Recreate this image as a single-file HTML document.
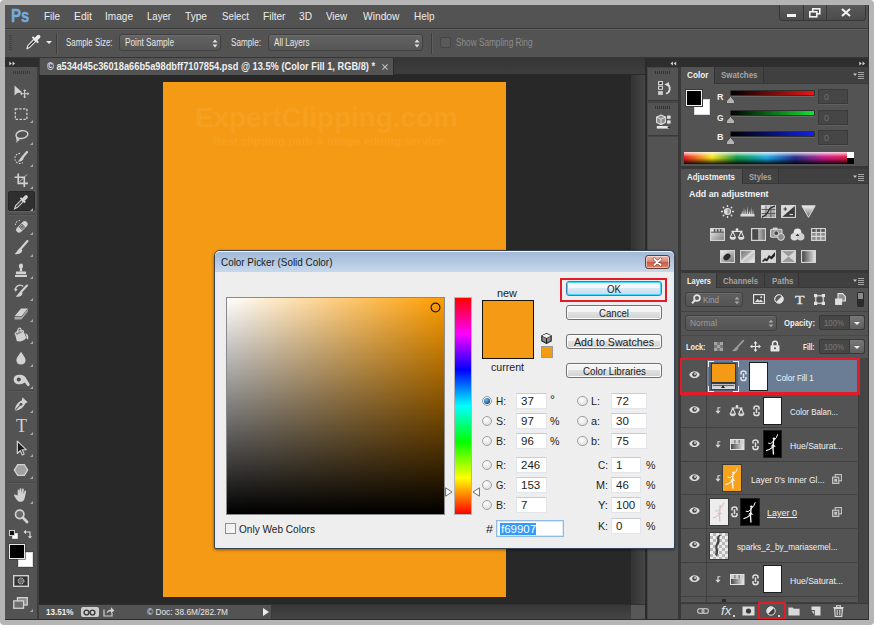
<!DOCTYPE html>
<html>
<head>
<meta charset="utf-8">
<title>Photoshop Color Picker</title>
<style>
*{box-sizing:border-box;margin:0;padding:0}
html,body{width:874px;height:625px;overflow:hidden;background:#fff}
body{font-family:"Liberation Sans",sans-serif;font-size:11px;color:#e4e4e4;position:relative}
.t{position:absolute;white-space:nowrap}
.box{position:absolute}
#frame{position:absolute;left:0;top:0;width:874px;height:625px;background:#b5b5b5;border-radius:4px}
#app{position:absolute;left:0;top:0;width:874px;height:625px;clip-path:inset(5px 5px 5px 5px)}
#appbg{position:absolute;left:0;top:0;width:874px;height:625px;background:#535353}
.dd{position:absolute;border:1px solid #404040;border-radius:3px;background:linear-gradient(#646464,#555555);box-shadow:inset 0 1px 0 #6c6c6c}
.sep{position:absolute;width:1px;background:#3e3e3e;box-shadow:1px 0 0 #5f5f5f}
svg{display:block;overflow:visible}
</style>
</head>
<body>
<div id="frame"></div>
<div id="app">
<div id="appbg"></div>
<div class="box" style="left:5px;top:5px;width:864px;height:23px;background:#535353"></div>
<div class="box" style="left:5px;top:28px;width:864px;height:1px;background:#3a3a3a"></div>
<div class="t" style="left:11px;top:5px;font-size:18px;line-height:22px;color:#76abde;font-weight:bold;font-family:'Liberation Sans',sans-serif;transform:scaleX(0.831);transform-origin:0 50%;-webkit-text-stroke:0.4px #76abde;">Ps</div>
<div class="t" style="left:44px;top:9px;font-size:11.5px;line-height:14px;color:#ececec;font-weight:normal;font-family:'Liberation Sans',sans-serif;transform:scaleX(0.863);transform-origin:0 50%;">File</div>
<div class="t" style="left:74px;top:9px;font-size:11.5px;line-height:14px;color:#ececec;font-weight:normal;font-family:'Liberation Sans',sans-serif;transform:scaleX(0.908);transform-origin:0 50%;">Edit</div>
<div class="t" style="left:104.5px;top:9px;font-size:11.5px;line-height:14px;color:#ececec;font-weight:normal;font-family:'Liberation Sans',sans-serif;transform:scaleX(0.876);transform-origin:0 50%;">Image</div>
<div class="t" style="left:147px;top:9px;font-size:11.5px;line-height:14px;color:#ececec;font-weight:normal;font-family:'Liberation Sans',sans-serif;transform:scaleX(0.834);transform-origin:0 50%;">Layer</div>
<div class="t" style="left:185px;top:9px;font-size:11.5px;line-height:14px;color:#ececec;font-weight:normal;font-family:'Liberation Sans',sans-serif;transform:scaleX(0.882);transform-origin:0 50%;">Type</div>
<div class="t" style="left:221.5px;top:9px;font-size:11.5px;line-height:14px;color:#ececec;font-weight:normal;font-family:'Liberation Sans',sans-serif;transform:scaleX(0.845);transform-origin:0 50%;">Select</div>
<div class="t" style="left:263px;top:9px;font-size:11.5px;line-height:14px;color:#ececec;font-weight:normal;font-family:'Liberation Sans',sans-serif;transform:scaleX(0.880);transform-origin:0 50%;">Filter</div>
<div class="t" style="left:299px;top:9px;font-size:11.5px;line-height:14px;color:#ececec;font-weight:normal;font-family:'Liberation Sans',sans-serif;transform:scaleX(0.884);transform-origin:0 50%;">3D</div>
<div class="t" style="left:326px;top:9px;font-size:11.5px;line-height:14px;color:#ececec;font-weight:normal;font-family:'Liberation Sans',sans-serif;transform:scaleX(0.850);transform-origin:0 50%;">View</div>
<div class="t" style="left:362.5px;top:9px;font-size:11.5px;line-height:14px;color:#ececec;font-weight:normal;font-family:'Liberation Sans',sans-serif;transform:scaleX(0.892);transform-origin:0 50%;">Window</div>
<div class="t" style="left:414px;top:9px;font-size:11.5px;line-height:14px;color:#ececec;font-weight:normal;font-family:'Liberation Sans',sans-serif;transform:scaleX(0.867);transform-origin:0 50%;">Help</div>
<div class="box" style="left:779px;top:5px;width:87px;height:16px;border:1px solid #383838;border-top:none;border-radius:0 0 4px 4px;background:linear-gradient(#5a5a5a,#4b4b4b)"></div>
<div class="box" style="left:803px;top:5px;width:1px;height:15px;background:#383838"></div>
<div class="box" style="left:826px;top:5px;width:1px;height:15px;background:#383838"></div>
<div class="box" style="left:787px;top:14px;width:9px;height:3px;background:#f2f2f2"></div>
<svg class="box" style="left:809px;top:8px" width="12" height="10" viewBox="0 0 12 10"><rect x="3.8" y="0.8" width="7" height="5" fill="none" stroke="#f2f2f2" stroke-width="1.6"/><rect x="0.8" y="3.8" width="7" height="5" fill="#505050" stroke="#f2f2f2" stroke-width="1.6"/></svg>
<svg class="box" style="left:841px;top:8px" width="10" height="9" viewBox="0 0 10 9"><path d="M1 1 L9 8 M9 1 L1 8" stroke="#f2f2f2" stroke-width="2.1"/></svg>
<div class="box" style="left:5px;top:29px;width:864px;height:28px;background:#535353;border-top:1px solid #606060"></div>
<div class="box" style="left:5px;top:57px;width:864px;height:1px;background:#363636"></div>
<div class="box" style="left:9px;top:35px;width:2.5px;height:16px;background:repeating-linear-gradient(#424242 0 1px,transparent 1px 2px)"></div>
<svg class="box" style="left:24.5px;top:33.5px" width="16" height="16" viewBox="0 0 17 17"><path d="M2 15.6 L3.2 12 L9.6 5.6 L11.6 7.6 L5.2 14 Z" fill="#2c2c2c" stroke="#e6e6e6" stroke-width="1.2" stroke-linejoin="round"/><path d="M8.6 3.8 L13.4 8.6" stroke="#e6e6e6" stroke-width="2.2" stroke-linecap="round"/><path d="M11.6 5.6 L14.4 2.8" stroke="#ededed" stroke-width="4" stroke-linecap="round"/></svg>
<div class="box" style="left:46px;top:41px;width:0px;height:0px;border:3px solid transparent;border-top:3px solid #ededed;border-bottom:none;width:0;height:0"></div>
<div class="sep" style="left:56px;top:33px;height:21px"></div>
<div class="t" style="left:65.5px;top:37px;font-size:10px;line-height:12px;color:#e6e6e6;font-weight:normal;font-family:'Liberation Sans',sans-serif;transform:scaleX(0.789);transform-origin:0 50%;">Sample Size:</div>
<div class="dd" style="left:119px;top:34px;width:102px;height:17px"></div>
<div class="t" style="left:125px;top:37px;font-size:10px;line-height:12px;color:#e6e6e6;font-weight:normal;font-family:'Liberation Sans',sans-serif;transform:scaleX(0.824);transform-origin:0 50%;">Point Sample</div>
<svg class="box" style="left:212px;top:38.5px" width="6" height="9" viewBox="0 0 6 9"><path d="M0.5 3.6 L3 0.6 L5.5 3.6 Z M0.5 5.4 L3 8.4 L5.5 5.4 Z" fill="#e2e2e2"/></svg>
<div class="t" style="left:231px;top:37px;font-size:10px;line-height:12px;color:#e6e6e6;font-weight:normal;font-family:'Liberation Sans',sans-serif;transform:scaleX(0.818);transform-origin:0 50%;">Sample:</div>
<div class="dd" style="left:268px;top:34px;width:155px;height:17px"></div>
<div class="t" style="left:274px;top:37px;font-size:10px;line-height:12px;color:#e6e6e6;font-weight:normal;font-family:'Liberation Sans',sans-serif;transform:scaleX(0.809);transform-origin:0 50%;">All Layers</div>
<svg class="box" style="left:414px;top:38.5px" width="6" height="9" viewBox="0 0 6 9"><path d="M0.5 3.6 L3 0.6 L5.5 3.6 Z M0.5 5.4 L3 8.4 L5.5 5.4 Z" fill="#e2e2e2"/></svg>
<div class="sep" style="left:431px;top:33px;height:21px"></div>
<div class="box" style="left:440px;top:37px;width:11px;height:11px;border:1px solid #464646;border-radius:2px;background:#5a5a5a"></div>
<div class="t" style="left:455.5px;top:37px;font-size:10px;line-height:12px;color:#8c8c8c;font-weight:normal;font-family:'Liberation Sans',sans-serif;transform:scaleX(0.824);transform-origin:0 50%;">Show Sampling Ring</div>
<div class="box" style="left:39px;top:58px;width:607px;height:17px;background:linear-gradient(#363636,#3e3e3e)"></div>
<div class="box" style="left:39px;top:74px;width:607px;height:1px;background:#2a2a2a"></div>
<div class="box" style="left:40px;top:58px;width:354px;height:17px;background:#535353;border-right:1px solid #2c2c2c"></div>
<div class="t" style="left:47px;top:60px;font-size:10px;line-height:13px;color:#efefef;font-weight:bold;font-family:'Liberation Sans',sans-serif;transform:scaleX(0.927);transform-origin:0 50%;">&copy; a534d45c36018a66b5a98dbff7107854.psd @ 13.5% (Color Fill 1, RGB/8) *</div>
<svg class="box" style="left:382px;top:63.5px" width="6" height="6" viewBox="0 0 7 7"><path d="M0.5 0.5 L6.5 6.5 M6.5 0.5 L0.5 6.5" stroke="#bdbdbd" stroke-width="1.3"/></svg>
<div class="box" style="left:39px;top:75px;width:607px;height:530px;background:#282828"></div>
<div class="box" style="left:630.5px;top:75px;width:14.5px;height:529px;background:linear-gradient(90deg,#333,#464646)"></div>
<div class="box" style="left:163.4px;top:82.4px;width:343px;height:514.2px;background:#f59a15"></div>
<div class="t" style="left:195px;top:102px;font-size:27.5px;line-height:32px;color:#f6a021;font-weight:bold;font-family:'Liberation Sans',sans-serif;transform:scaleX(1.011);transform-origin:0 50%;">ExpertClipping.com</div>
<div class="t" style="left:213px;top:135px;font-size:10.5px;line-height:13px;color:#f6a021;font-weight:bold;font-family:'Liberation Sans',sans-serif;transform:scaleX(1.094);transform-origin:0 50%;">Best clipping path &amp; image editing service</div>
<div class="box" style="left:5px;top:58px;width:32px;height:562px;background:#535353"></div>
<div class="box" style="left:37px;top:58px;width:2px;height:562px;background:#3c3c3c"></div>
<div class="box" style="left:5px;top:58px;width:34px;height:9px;background:#2e2e2e"></div>
<svg class="box" style="left:9px;top:60.5px" width="6.5" height="5" viewBox="0 0 8 6"><path d="M0.4 0.4 L3.4 3 L0.4 5.6 Z M4.4 0.4 L7.4 3 L4.4 5.6 Z" fill="#d6d6d6"/></svg>
<div class="box" style="left:13px;top:71px;width:17px;height:3px;background:repeating-linear-gradient(90deg,#383838 0 1.2px,transparent 1.2px 2px)"></div>
<div class="box" style="left:8px;top:191px;width:27px;height:20px;background:#2f2f2f;border:1px solid #272727;border-radius:2px;box-shadow:0 1px 0 #616161"></div>
<svg class="box" style="left:10.600000000000001px;top:81px" width="20" height="20" viewBox="0 0 20 20"><g transform="translate(10 10) scale(0.92) translate(-10 -10)"><path d="M3 4 L3 15 L6 12.2 L11.5 11.6 Z" fill="#d2d2d2"/><path d="M14 9 L14 17 M10 13 L18 13" stroke="#d2d2d2" stroke-width="1.2"/><path d="M14 8 L15.8 10 L12.2 10 Z M14 18 L15.8 16 L12.2 16 Z M9 13 L11 11.2 L11 14.8 Z M19 13 L17 11.2 L17 14.8 Z" fill="#d2d2d2"/></g></svg>
<svg class="box" style="left:10.600000000000001px;top:104px" width="20" height="20" viewBox="0 0 20 20"><g transform="translate(10 10) scale(0.92) translate(-10 -10)"><rect x="3.8" y="4.4" width="12.6" height="11.4" fill="none" stroke="#d2d2d2" stroke-width="1.4" stroke-dasharray="2.6 1.6"/></g></svg>
<svg class="box" style="left:29.5px;top:119.5px" width="3" height="3" viewBox="0 0 3 3"><path d="M3 0 L3 3 L0 3 Z" fill="#a8a8a8"/></svg>
<svg class="box" style="left:10.600000000000001px;top:126px" width="20" height="20" viewBox="0 0 20 20"><g transform="translate(10 10) scale(0.92) translate(-10 -10)"><ellipse cx="11" cy="8.5" rx="6.5" ry="4.2" fill="none" stroke="#d2d2d2" stroke-width="1.6" transform="rotate(-12 11 8.5)"/><path d="M6 11.5 C4.5 13 5.5 15 7.5 14.5 C8.5 14 7 12.5 6 13.5 L5.5 17" fill="none" stroke="#d2d2d2" stroke-width="1.2"/></g></svg>
<svg class="box" style="left:29.5px;top:141.5px" width="3" height="3" viewBox="0 0 3 3"><path d="M3 0 L3 3 L0 3 Z" fill="#a8a8a8"/></svg>
<svg class="box" style="left:10.600000000000001px;top:148px" width="20" height="20" viewBox="0 0 20 20"><g transform="translate(10 10) scale(0.92) translate(-10 -10)"><path d="M9 5 A5.5 5.5 0 1 0 12 15" fill="none" stroke="#d2d2d2" stroke-width="1.2" stroke-dasharray="1.8 1.4"/><path d="M16.5 3.5 L11.5 9.5" stroke="#d2d2d2" stroke-width="2.4" stroke-linecap="round"/><path d="M11.5 9 C8.5 9.5 9 12.5 6.5 13.5 C9.5 14.5 12.5 13 12.8 10.4 Z" fill="#d2d2d2"/></g></svg>
<svg class="box" style="left:29.5px;top:163.5px" width="3" height="3" viewBox="0 0 3 3"><path d="M3 0 L3 3 L0 3 Z" fill="#a8a8a8"/></svg>
<svg class="box" style="left:10.600000000000001px;top:170px" width="20" height="20" viewBox="0 0 20 20"><g transform="translate(10 10) scale(0.92) translate(-10 -10)"><path d="M7 3 L7 13.6 L17.6 13.6 M3 7 L13.6 7 L13.6 17.6" fill="none" stroke="#d2d2d2" stroke-width="1.8"/><path d="M8.5 12 L16.5 4" stroke="#d2d2d2" stroke-width="1"/></g></svg>
<svg class="box" style="left:29.5px;top:185.5px" width="3" height="3" viewBox="0 0 3 3"><path d="M3 0 L3 3 L0 3 Z" fill="#a8a8a8"/></svg>
<svg class="box" style="left:10.600000000000001px;top:192px" width="20" height="20" viewBox="0 0 20 20"><g transform="translate(10 10) scale(0.92) translate(-10 -10)"><path d="M3 17.5 L4.2 13.8 L10.5 7.5 L12.5 9.5 L6.2 15.8 Z" fill="#3a3a3a" stroke="#d2d2d2" stroke-width="1.2"/><path d="M9.5 5.5 L14.5 10.5" stroke="#d2d2d2" stroke-width="2.2"/><path d="M12.5 7.5 L15.5 4.5" stroke="#d2d2d2" stroke-width="4" stroke-linecap="round"/></g></svg>
<svg class="box" style="left:29.5px;top:207.5px" width="3" height="3" viewBox="0 0 3 3"><path d="M3 0 L3 3 L0 3 Z" fill="#a8a8a8"/></svg>
<svg class="box" style="left:10.600000000000001px;top:216px" width="20" height="20" viewBox="0 0 20 20"><g transform="translate(10 10) scale(0.92) translate(-10 -10)"><path d="M4 9 A5 5 0 0 1 10 4" fill="none" stroke="#d2d2d2" stroke-width="1.1" stroke-dasharray="1.6 1.4"/><g transform="rotate(-45 11 11)"><rect x="3.5" y="7.8" width="15" height="6.4" rx="3.2" fill="#d2d2d2"/><rect x="8.6" y="8.6" width="4.8" height="4.8" fill="#535353"/><circle cx="10" cy="10" r="0.7" fill="#d2d2d2"/><circle cx="12" cy="12" r="0.7" fill="#d2d2d2"/><circle cx="12" cy="10" r="0.7" fill="#d2d2d2"/><circle cx="10" cy="12" r="0.7" fill="#d2d2d2"/></g></g></svg>
<svg class="box" style="left:29.5px;top:231.5px" width="3" height="3" viewBox="0 0 3 3"><path d="M3 0 L3 3 L0 3 Z" fill="#a8a8a8"/></svg>
<svg class="box" style="left:10.600000000000001px;top:238px" width="20" height="20" viewBox="0 0 20 20"><g transform="translate(10 10) scale(0.92) translate(-10 -10)"><path d="M17 2.5 L9.5 11" stroke="#d2d2d2" stroke-width="2.4" stroke-linecap="round"/><path d="M9.6 10.4 C6.2 10.6 6.8 14.2 3 16.4 C7 17.6 11.2 15.6 11.4 12.2 Z" fill="#d2d2d2"/></g></svg>
<svg class="box" style="left:29.5px;top:253.5px" width="3" height="3" viewBox="0 0 3 3"><path d="M3 0 L3 3 L0 3 Z" fill="#a8a8a8"/></svg>
<svg class="box" style="left:10.600000000000001px;top:260px" width="20" height="20" viewBox="0 0 20 20"><g transform="translate(10 10) scale(0.92) translate(-10 -10)"><path d="M3.5 15.5 H16.5 V17.5 H3.5 Z M4.5 11.5 H15.5 V14.5 H4.5 Z" fill="#d2d2d2"/><path d="M8.6 11.5 L8.9 8.5 C7 7 7.5 3 10 3 C12.5 3 13 7 11.1 8.5 L11.4 11.5 Z" fill="#d2d2d2"/></g></svg>
<svg class="box" style="left:29.5px;top:275.5px" width="3" height="3" viewBox="0 0 3 3"><path d="M3 0 L3 3 L0 3 Z" fill="#a8a8a8"/></svg>
<svg class="box" style="left:10.600000000000001px;top:282px" width="20" height="20" viewBox="0 0 20 20"><g transform="translate(10 10) scale(0.92) translate(-10 -10)"><path d="M16.5 3 L10 10" stroke="#d2d2d2" stroke-width="2.2" stroke-linecap="round"/><path d="M10 9.6 C7 9.8 7.6 13 4.2 14.8 C8 16 11.6 14.2 11.8 11.2 Z" fill="#d2d2d2"/><path d="M4 8 A5 5 0 0 1 12.5 4" fill="none" stroke="#d2d2d2" stroke-width="1.3"/><path d="M2.2 6.6 L4.2 9.6 L6.4 6.8 Z" fill="#d2d2d2"/></g></svg>
<svg class="box" style="left:29.5px;top:297.5px" width="3" height="3" viewBox="0 0 3 3"><path d="M3 0 L3 3 L0 3 Z" fill="#a8a8a8"/></svg>
<svg class="box" style="left:10.600000000000001px;top:303px" width="20" height="20" viewBox="0 0 20 20"><g transform="translate(10 10) scale(0.92) translate(-10 -10)"><path d="M3 13.5 L10 5 L17.5 5 L10.5 13.5 Z" fill="#d2d2d2"/><path d="M3 14.3 L10.5 14.3 L17.5 5.8 L17.5 8.5 L10.5 17 L3 17 Z" fill="#a9a9a9"/></g></svg>
<svg class="box" style="left:29.5px;top:318.5px" width="3" height="3" viewBox="0 0 3 3"><path d="M3 0 L3 3 L0 3 Z" fill="#a8a8a8"/></svg>
<svg class="box" style="left:10.600000000000001px;top:325px" width="20" height="20" viewBox="0 0 20 20"><g transform="translate(10 10) scale(0.92) translate(-10 -10)"><path d="M3.6 9.2 L12.6 5.6 L15.8 13 C13.5 16.4 8.8 18 5.4 16.6 Z" fill="#d2d2d2"/><ellipse cx="8.1" cy="7.4" rx="4.9" ry="1.9" transform="rotate(-22 8.1 7.4)" fill="#8e8e8e" stroke="#d2d2d2" stroke-width="1"/><path d="M6.5 7.6 C5.5 3.2 8.6 1.2 9.8 3.4 C10.4 4.6 10.4 6 10.2 7" fill="none" stroke="#d2d2d2" stroke-width="1.2"/><path d="M14.2 8.2 C16.8 8.6 18.2 10.4 18 13.2 C17.9 15 16 15 16 13.2 C16.1 11.4 15.4 9.8 14.2 8.2 Z" fill="#d2d2d2"/></g></svg>
<svg class="box" style="left:29.5px;top:340.5px" width="3" height="3" viewBox="0 0 3 3"><path d="M3 0 L3 3 L0 3 Z" fill="#a8a8a8"/></svg>
<svg class="box" style="left:10.600000000000001px;top:348px" width="20" height="20" viewBox="0 0 20 20"><g transform="translate(10 10) scale(0.92) translate(-10 -10)"><path d="M10 2.8 C12.2 7 15 9.4 15 12.4 C15 15.2 12.8 17.2 10 17.2 C7.2 17.2 5 15.2 5 12.4 C5 9.4 7.8 7 10 2.8 Z" fill="#d2d2d2"/></g></svg>
<svg class="box" style="left:29.5px;top:363.5px" width="3" height="3" viewBox="0 0 3 3"><path d="M3 0 L3 3 L0 3 Z" fill="#a8a8a8"/></svg>
<svg class="box" style="left:10.600000000000001px;top:370px" width="20" height="20" viewBox="0 0 20 20"><g transform="translate(10 10) scale(0.92) translate(-10 -10)"><path d="M2 9.4 C2 5.4 5.6 4 9.6 4.2 C13.4 4.4 15 6.4 16 9 L19.4 14.6 C19.8 16.4 17.6 17.4 16.6 16 L14.2 12.8 C12 14.6 9 15 6.6 14.6 C3.8 14.2 2 12.4 2 9.4 Z" fill="#d2d2d2"/><circle cx="7.6" cy="9.4" r="2.2" fill="#4a4a4a"/></g></svg>
<svg class="box" style="left:29.5px;top:385.5px" width="3" height="3" viewBox="0 0 3 3"><path d="M3 0 L3 3 L0 3 Z" fill="#a8a8a8"/></svg>
<svg class="box" style="left:10.600000000000001px;top:394px" width="20" height="20" viewBox="0 0 20 20"><g transform="translate(10 10) scale(0.92) translate(-10 -10)"><path d="M11.6 2.6 L17.2 8.2 L14.6 9.4 C13 13.6 9.6 16.2 4 17.4 L3 16.4 C4.2 10.8 6.8 7.4 11 5.8 Z" fill="#d2d2d2"/><path d="M3.6 16.8 L9.4 11" stroke="#535353" stroke-width="1.1"/><circle cx="10" cy="10.4" r="1.5" fill="#535353"/></g></svg>
<svg class="box" style="left:29.5px;top:409.5px" width="3" height="3" viewBox="0 0 3 3"><path d="M3 0 L3 3 L0 3 Z" fill="#a8a8a8"/></svg>
<div class="t" style="left:15.5px;top:416px;font-size:19px;line-height:20px;color:#d2d2d2;font-weight:normal;font-family:'Liberation Serif',sans-serif;transform:scaleX(0.948);transform-origin:0 50%;">T</div>
<svg class="box" style="left:29.5px;top:431.5px" width="3" height="3" viewBox="0 0 3 3"><path d="M3 0 L3 3 L0 3 Z" fill="#a8a8a8"/></svg>
<svg class="box" style="left:10.600000000000001px;top:438px" width="20" height="20" viewBox="0 0 20 20"><g transform="translate(10 10) scale(0.92) translate(-10 -10)"><path d="M6 2.5 L6 16 L9.2 12.8 L11.4 17.6 L13.4 16.6 L11.2 12 L15.6 11.8 Z" fill="#1c1c1c" stroke="#d2d2d2" stroke-width="1.3" stroke-linejoin="round"/></g></svg>
<svg class="box" style="left:29.5px;top:453.5px" width="3" height="3" viewBox="0 0 3 3"><path d="M3 0 L3 3 L0 3 Z" fill="#a8a8a8"/></svg>
<svg class="box" style="left:10.600000000000001px;top:460px" width="20" height="20" viewBox="0 0 20 20"><g transform="translate(10 10) scale(0.92) translate(-10 -10)"><path d="M6.4 4.2 L13.6 4.2 L17.2 10 L13.6 15.8 L6.4 15.8 L2.8 10 Z" fill="#a2a2a2" stroke="#d2d2d2" stroke-width="1.5"/></g></svg>
<svg class="box" style="left:29.5px;top:475.5px" width="3" height="3" viewBox="0 0 3 3"><path d="M3 0 L3 3 L0 3 Z" fill="#a8a8a8"/></svg>
<svg class="box" style="left:10.600000000000001px;top:485px" width="20" height="20" viewBox="0 0 20 20"><g transform="translate(10 10) scale(0.92) translate(-10 -10)"><path d="M6.4 10.5 L6.4 5 C6.4 3.8 8.2 3.8 8.2 5 L8.2 8.6 L8.6 3.4 C8.7 2.2 10.5 2.3 10.4 3.5 L10.4 8.4 L11.2 3.8 C11.4 2.6 13.1 2.9 13 4.1 L12.6 8.8 L13.8 5.8 C14.2 4.7 15.8 5.3 15.5 6.4 L14.4 11.6 C14 15.4 12.4 17.4 9.6 17.4 C7.2 17.4 6 16.2 4.6 14 L2.6 10.8 C2 9.6 3.5 8.8 4.3 9.8 Z" fill="#d2d2d2"/></g></svg>
<svg class="box" style="left:29.5px;top:500.5px" width="3" height="3" viewBox="0 0 3 3"><path d="M3 0 L3 3 L0 3 Z" fill="#a8a8a8"/></svg>
<svg class="box" style="left:10.600000000000001px;top:506px" width="20" height="20" viewBox="0 0 20 20"><g transform="translate(10 10) scale(0.92) translate(-10 -10)"><circle cx="8.6" cy="8.2" r="4.6" fill="#6a6a6a" stroke="#d2d2d2" stroke-width="1.8"/><path d="M12 11.8 L16.6 16.6" stroke="#d2d2d2" stroke-width="3" stroke-linecap="round"/></g></svg>
<div class="box" style="left:8px;top:214px;width:27px;height:1px;background:#474747;box-shadow:0 1px 0 #5a5a5a"></div>
<div class="box" style="left:8px;top:390px;width:27px;height:1px;background:#474747;box-shadow:0 1px 0 #5a5a5a"></div>
<div class="box" style="left:8px;top:482px;width:27px;height:1px;background:#474747;box-shadow:0 1px 0 #5a5a5a"></div>
<svg class="box" style="left:8.5px;top:529.5px" width="9" height="9" viewBox="0 0 9 9"><rect x="3.5" y="3.5" width="5" height="5" fill="#fff" stroke="#ddd" stroke-width="0.8"/><rect x="0.5" y="0.5" width="5" height="5" fill="#111" stroke="#ddd" stroke-width="0.9"/></svg>
<svg class="box" style="left:22.5px;top:528.5px" width="10" height="10" viewBox="0 0 10 10"><path d="M2.5 3 L7 3 L7 7.5" fill="none" stroke="#ddd" stroke-width="1.1"/><path d="M0.6 3 L3 0.8 L3 5.2 Z M7 9.6 L4.8 7.2 L9.2 7.2 Z" fill="#ddd"/></svg>
<div class="box" style="left:17.5px;top:552px;width:15.5px;height:15px;background:#fff;border:1px solid #dcdcdc;box-shadow:0 0 0 0.5px #3a3a3a"></div>
<div class="box" style="left:9px;top:543.5px;width:15.5px;height:15.5px;background:#000;border:1px solid #e8e8e8;box-shadow:0 0 0 0.6px #3a3a3a"></div>
<svg class="box" style="left:13px;top:575px" width="16" height="12" viewBox="0 0 16 12"><rect x="0.7" y="0.7" width="14.6" height="10.6" fill="#333" stroke="#d2d2d2" stroke-width="1.4"/><circle cx="8" cy="6" r="3" fill="#6a6a6a" stroke="#d2d2d2" stroke-width="1" stroke-dasharray="1.4 1"/></svg>
<svg class="box" style="left:13px;top:597px" width="15" height="12" viewBox="0 0 16 13"><rect x="4.7" y="0.7" width="10.6" height="8" fill="#8a8a8a" stroke="#d2d2d2" stroke-width="1.4"/><rect x="0.7" y="4.2" width="10.6" height="8" fill="#6e6e6e" stroke="#d2d2d2" stroke-width="1.4"/></svg>
<svg class="box" style="left:29.5px;top:608.5px" width="3" height="3" viewBox="0 0 3 3"><path d="M3 0 L3 3 L0 3 Z" fill="#a8a8a8"/></svg>
<div class="box" style="left:39px;top:604px;width:607px;height:16px;background:#535353;border-top:1px solid #303030"></div>
<div class="t" style="left:45.5px;top:606px;font-size:9.5px;line-height:12px;color:#f0f0f0;font-weight:bold;font-family:'Liberation Sans',sans-serif;transform:scaleX(0.853);transform-origin:0 50%;">13.51%</div>
<div class="box" style="left:80.5px;top:607px;width:18px;height:10px;background:#cdcdcd;border-radius:2px"></div>
<svg class="box" style="left:83px;top:608.5px" width="13" height="7" viewBox="0 0 13 7"><circle cx="3.5" cy="3.5" r="2.4" fill="none" stroke="#3a3a3a" stroke-width="1.4"/><circle cx="9.5" cy="3.5" r="2.4" fill="none" stroke="#3a3a3a" stroke-width="1.4"/></svg>
<svg class="box" style="left:102.5px;top:606px" width="12" height="11" viewBox="0 0 12 11"><path d="M1 3.5 L1 10 L9 10 L9 7" fill="none" stroke="#cfcfcf" stroke-width="1.2"/><path d="M3.5 7.5 C4 4.5 6 3.5 8 3.5 L8 1.2 L11.4 4.4 L8 7.4 L8 5.4 C6 5.4 4.8 6 3.5 7.5 Z" fill="#cfcfcf"/></svg>
<div class="t" style="left:147px;top:606px;font-size:9.5px;line-height:12px;color:#e8e8e8;font-weight:normal;font-family:'Liberation Sans',sans-serif;transform:scaleX(0.875);transform-origin:0 50%;">&copy; Doc: 38.6M/282.7M</div>
<div class="box" style="left:262.5px;top:608px;width:0px;height:0px;border:4px solid transparent;border-left:6px solid #ededed;border-right:none;width:0;height:0"></div>
<div class="box" style="left:271px;top:605px;width:359.5px;height:15px;background:linear-gradient(#373737,#464646);border-left:1px solid #3a3a3a"></div>
<div class="box" style="left:630.5px;top:605px;width:14.5px;height:15px;background:#575757"></div>
<div class="box" style="left:646.5px;top:58px;width:222.5px;height:9px;background:#2e2e2e"></div>
<svg class="box" style="left:669.5px;top:60.5px" width="6.5" height="5" viewBox="0 0 8 6"><path d="M3.6 0.4 L0.6 3 L3.6 5.6 Z M7.6 0.4 L4.6 3 L7.6 5.6 Z" fill="#d6d6d6"/></svg>
<svg class="box" style="left:858.5px;top:60.5px" width="6.5" height="5" viewBox="0 0 8 6"><path d="M0.4 0.4 L3.4 3 L0.4 5.6 Z M4.4 0.4 L7.4 3 L4.4 5.6 Z" fill="#d6d6d6"/></svg>
<div class="box" style="left:645px;top:58px;width:2px;height:562px;background:#2b2b2b"></div>
<div class="box" style="left:646.5px;top:67px;width:34px;height:553px;background:#454545"></div>
<div class="box" style="left:678px;top:67px;width:2.5px;height:553px;background:#393939"></div>
<div class="box" style="left:647.5px;top:68px;width:30.5px;height:33px;background:#535353;border-bottom:1px solid #3a3a3a"></div>
<div class="box" style="left:654.5px;top:71px;width:16px;height:3px;background:repeating-linear-gradient(90deg,#343434 0 1.2px,transparent 1.2px 2px)"></div>
<div class="box" style="left:647.5px;top:103px;width:30.5px;height:33px;background:#535353;border-bottom:1px solid #3a3a3a"></div>
<div class="box" style="left:654.5px;top:106px;width:16px;height:3px;background:repeating-linear-gradient(90deg,#343434 0 1.2px,transparent 1.2px 2px)"></div>
<div class="box" style="left:647.5px;top:137px;width:30.5px;height:483px;background:#535353"></div>
<svg class="box" style="left:657.5px;top:81px" width="14" height="14" viewBox="0 0 14 14"><rect x="0.6" y="0.6" width="3.8" height="3" fill="#333" stroke="#dcdcdc" stroke-width="1.1"/><rect x="0.6" y="5.3" width="3.8" height="3" fill="#333" stroke="#dcdcdc" stroke-width="1.1"/><rect x="0.1" y="10.1" width="4.8" height="3.8" fill="#cfcfcf"/><path d="M8 12.6 C12.4 11.4 13 5.6 9.4 3" fill="none" stroke="#dcdcdc" stroke-width="1.7"/><path d="M6.4 3.4 L11 1 L10.6 5.8 Z" fill="#dcdcdc"/></svg>
<svg class="box" style="left:656px;top:114px" width="15" height="15" viewBox="0 0 15 15"><path d="M5 1 L9.4 3 L9.4 8.4 L5 10.6 L0.6 8.4 L0.6 3 Z" fill="#8a8a8a" stroke="#e0e0e0" stroke-width="1.1"/><path d="M0.6 3 L5 5.2 L9.4 3 M5 5.2 V10.6" stroke="#e0e0e0" stroke-width="1" fill="none"/><rect x="11" y="1.6" width="3.6" height="3.2" fill="#e0e0e0"/><rect x="11" y="6.4" width="3.6" height="3.2" fill="#e0e0e0"/><rect x="0.8" y="12" width="12.4" height="2.6" fill="#e6e6e6"/><rect x="11.6" y="12.4" width="2.6" height="1.8" fill="#2e2e2e"/></svg>
<div class="box" style="left:681px;top:67px;width:188px;height:100px;background:#535353"></div>
<div class="box" style="left:681px;top:67px;width:188px;height:17px;background:#404040;border-bottom:1px solid #393939"></div>
<div class="box" style="left:681px;top:67px;width:34px;height:17px;background:#535353;border-right:1px solid #343434"></div>
<div class="t" style="left:687px;top:69px;font-size:9px;line-height:13px;color:#f2f2f2;font-weight:bold;font-family:'Liberation Sans',sans-serif;transform:scaleX(0.915);transform-origin:0 50%;">Color</div>
<div class="box" style="left:715px;top:67px;width:49px;height:16px;background:#434343;border-right:1px solid #343434"></div>
<div class="t" style="left:720.5px;top:69px;font-size:9px;line-height:13px;color:#a4a4a4;font-weight:bold;font-family:'Liberation Sans',sans-serif;transform:scaleX(0.879);transform-origin:0 50%;">Swatches</div>
<svg class="box" style="left:853px;top:72px" width="11" height="7" viewBox="0 0 11 7"><path d="M0 1.5 L4 1.5 L2 4 Z" fill="#c4c4c4"/><path d="M5 0.5 H11 M5 2.5 H11 M5 4.5 H11 M5 6.5 H11" stroke="#a4a4a4" stroke-width="1"/></svg>
<div class="box" style="left:694px;top:99px;width:16px;height:16px;background:#fff;border:1px solid #d8d8d8"></div>
<div class="box" style="left:686px;top:90px;width:16px;height:16px;background:#000;border:1px solid #f0f0f0;box-shadow:0 0 0 1px #3a3a3a"></div>
<div class="t" style="left:717px;top:91px;font-size:9.5px;line-height:12px;color:#f0f0f0;font-weight:bold;font-family:'Liberation Sans',sans-serif;transform:scaleX(0.945);transform-origin:0 50%;">R</div>
<div class="box" style="left:730px;top:90px;width:85px;height:5.5px;background:linear-gradient(90deg,#000,#ee1414);border:1px solid #303030;border-radius:1px;box-shadow:0 1px 0 #686868"></div>
<svg class="box" style="left:726px;top:95.5px" width="9" height="8" viewBox="0 0 9 8"><path d="M4.5 0.4 L8.5 5 V7.6 H0.5 V5 Z" fill="#b4b4b4" stroke="#3a3a3a" stroke-width="0.7"/></svg>
<div class="box" style="left:818px;top:89px;width:30px;height:15px;background:#464646;border:1px solid #3a3a3a;box-shadow:0 1px 0 #5f5f5f"></div>
<div class="t" style="left:823.5px;top:91px;font-size:9.5px;line-height:12px;color:#6f6f6f;font-weight:normal;font-family:'Liberation Sans',sans-serif;transform:scaleX(0.944);transform-origin:0 50%;">0</div>
<div class="t" style="left:717px;top:111.5px;font-size:9.5px;line-height:12px;color:#f0f0f0;font-weight:bold;font-family:'Liberation Sans',sans-serif;transform:scaleX(0.879);transform-origin:0 50%;">G</div>
<div class="box" style="left:730px;top:110px;width:85px;height:5.5px;background:linear-gradient(90deg,#000,#14e032);border:1px solid #303030;border-radius:1px;box-shadow:0 1px 0 #686868"></div>
<svg class="box" style="left:726px;top:115.5px" width="9" height="8" viewBox="0 0 9 8"><path d="M4.5 0.4 L8.5 5 V7.6 H0.5 V5 Z" fill="#b4b4b4" stroke="#3a3a3a" stroke-width="0.7"/></svg>
<div class="box" style="left:818px;top:109.5px;width:30px;height:15px;background:#464646;border:1px solid #3a3a3a;box-shadow:0 1px 0 #5f5f5f"></div>
<div class="t" style="left:823.5px;top:111.5px;font-size:9.5px;line-height:12px;color:#6f6f6f;font-weight:normal;font-family:'Liberation Sans',sans-serif;transform:scaleX(0.944);transform-origin:0 50%;">0</div>
<div class="t" style="left:717px;top:131px;font-size:9.5px;line-height:12px;color:#f0f0f0;font-weight:bold;font-family:'Liberation Sans',sans-serif;transform:scaleX(0.945);transform-origin:0 50%;">B</div>
<div class="box" style="left:730px;top:131px;width:85px;height:5.5px;background:linear-gradient(90deg,#000,#1020ee);border:1px solid #303030;border-radius:1px;box-shadow:0 1px 0 #686868"></div>
<svg class="box" style="left:726px;top:136.5px" width="9" height="8" viewBox="0 0 9 8"><path d="M4.5 0.4 L8.5 5 V7.6 H0.5 V5 Z" fill="#b4b4b4" stroke="#3a3a3a" stroke-width="0.7"/></svg>
<div class="box" style="left:818px;top:130px;width:30px;height:15px;background:#464646;border:1px solid #3a3a3a;box-shadow:0 1px 0 #5f5f5f"></div>
<div class="t" style="left:823.5px;top:132px;font-size:9.5px;line-height:12px;color:#6f6f6f;font-weight:normal;font-family:'Liberation Sans',sans-serif;transform:scaleX(0.944);transform-origin:0 50%;">0</div>
<div class="box" style="left:684px;top:152px;width:170px;height:12px;background:linear-gradient(rgba(0,0,0,0) 50%,rgba(0,0,0,.9)),linear-gradient(90deg,#ea1c24 0%,#f27a1e 8%,#f8e41c 16.5%,#86bc2e 24%,#169a48 31%,#10a28c 40%,#1eaae2 48.5%,#2064ba 58%,#282e8c 65.5%,#6e2a8c 73%,#c61a8a 82%,#e2185a 92%,#e21e2c 100%)"></div>
<div class="box" style="left:684px;top:152px;width:163px;height:5px;background:linear-gradient(rgba(255,255,255,.85),rgba(255,255,255,0))"></div>
<div class="box" style="left:847px;top:152px;width:7px;height:6px;background:#fff"></div>
<div class="box" style="left:847px;top:158px;width:7px;height:6px;background:#000"></div>
<div class="box" style="left:681px;top:166px;width:188px;height:3px;background:#383838"></div>
<div class="box" style="left:681px;top:169px;width:188px;height:101px;background:#535353"></div>
<div class="box" style="left:681px;top:169px;width:188px;height:15px;background:#404040;border-bottom:1px solid #393939"></div>
<div class="box" style="left:681px;top:169px;width:62px;height:15px;background:#535353;border-right:1px solid #343434"></div>
<div class="t" style="left:687px;top:170.5px;font-size:9px;line-height:13px;color:#f2f2f2;font-weight:bold;font-family:'Liberation Sans',sans-serif;transform:scaleX(0.880);transform-origin:0 50%;">Adjustments</div>
<div class="box" style="left:743px;top:169px;width:36px;height:14px;background:#434343;border-right:1px solid #343434"></div>
<div class="t" style="left:749px;top:170.5px;font-size:9px;line-height:13px;color:#a4a4a4;font-weight:bold;font-family:'Liberation Sans',sans-serif;transform:scaleX(0.848);transform-origin:0 50%;">Styles</div>
<svg class="box" style="left:853px;top:174px" width="11" height="7" viewBox="0 0 11 7"><path d="M0 1.5 L4 1.5 L2 4 Z" fill="#c4c4c4"/><path d="M5 0.5 H11 M5 2.5 H11 M5 4.5 H11 M5 6.5 H11" stroke="#a4a4a4" stroke-width="1"/></svg>
<div class="t" style="left:688.5px;top:187px;font-size:9.5px;line-height:13px;color:#f4f4f4;font-weight:bold;font-family:'Liberation Sans',sans-serif;transform:scaleX(0.930);transform-origin:0 50%;">Add an adjustment</div>
<svg class="box" style="left:720px;top:205px" width="15" height="13" viewBox="0 0 15 13"><circle cx="7.5" cy="6.5" r="3" fill="#8f8f8f" stroke="#d9d9d9" stroke-width="1.2"/><path d="M7.5 3.5 A3 3 0 0 0 7.5 9.5 Z" fill="#d9d9d9"/><path d="M7.5 0 V2 M7.5 11 V13 M1 6.5 H3 M12 6.5 H14 M2.8 1.8 L4.2 3.2 M10.8 9.8 L12.2 11.2 M12.2 1.8 L10.8 3.2 M4.2 9.8 L2.8 11.2" stroke="#d9d9d9" stroke-width="1.3"/></svg>
<svg class="box" style="left:740px;top:205px" width="15" height="13" viewBox="0 0 15 13"><path d="M0.5 11.5 H14.5 V9 L13.5 9 L13 4 L12.5 9 L11.8 9 L11.2 2 L10.6 9 L10 9 L9.4 5 L8.8 9 L8.2 9 L7.6 1 L7 9 L6.4 9 L5.8 4 L5.2 9 L4.6 9 L4 2.5 L3.4 9 L2.8 9 L2.2 5.5 L1.6 9 L0.5 9 Z" fill="#d9d9d9"/></svg>
<svg class="box" style="left:761px;top:205px" width="15" height="13" viewBox="0 0 15 13"><defs><linearGradient id="ac" x1="0" x2="1" y1="0" y2="1"><stop offset="0" stop-color="#e8e8e8"/><stop offset="1" stop-color="#8a8a8a"/></linearGradient></defs><rect x="0.6" y="0.6" width="13.8" height="11.8" fill="url(#ac)" stroke="#d9d9d9" stroke-width="1.1"/><path d="M0.6 4.5 H14.4 M0.6 8.5 H14.4 M5 0.6 V12.4 M9.8 0.6 V12.4" stroke="#4a4a4a" stroke-width="0.8"/><path d="M1 12 C5 11 7 7 8 5 C9.5 2 12 1.5 14 1" fill="none" stroke="#2e2e2e" stroke-width="1.4"/></svg>
<svg class="box" style="left:781px;top:205px" width="15" height="13" viewBox="0 0 15 13"><rect x="0.6" y="0.6" width="13.8" height="11.8" fill="#3a3a3a" stroke="#d9d9d9" stroke-width="1.1"/><path d="M0.6 12.4 L14.4 0.6 L0.6 0.6 Z" fill="#d9d9d9"/><path d="M2.5 4 H6 M4.25 2.3 V5.7" stroke="#3a3a3a" stroke-width="1.1"/><path d="M8.5 9.5 H12" stroke="#d9d9d9" stroke-width="1.1"/></svg>
<svg class="box" style="left:801px;top:205px" width="15" height="13" viewBox="0 0 15 13"><defs><linearGradient id="av" x1="0" x2="0" y1="0" y2="1"><stop offset="0" stop-color="#f0f0f0"/><stop offset="1" stop-color="#6a6a6a"/></linearGradient></defs><path d="M0.8 0.8 H14.2 L7.5 12.4 Z" fill="url(#av)" stroke="#d9d9d9" stroke-width="1"/></svg>
<svg class="box" style="left:710px;top:228px" width="15" height="13" viewBox="0 0 15 13"><defs><linearGradient id="ah" x1="0" x2="1" y1="0" y2="1"><stop offset="0" stop-color="#f2f2f2"/><stop offset="1" stop-color="#7a7a7a"/></linearGradient></defs><rect x="0.6" y="0.6" width="13.8" height="11.8" fill="url(#ah)" stroke="#d9d9d9" stroke-width="1.1"/><path d="M1 4.2 H14" stroke="#555" stroke-width="1"/><path d="M4.6 1 V4 M7.6 1 V4 M10.6 1 V4" stroke="#555" stroke-width="1.5"/></svg>
<svg class="box" style="left:729px;top:228px" width="16" height="13" viewBox="0 0 16 13"><path d="M8 1 V3.4 M2.5 3.4 H13.5 M3.8 3.4 L1.2 9.4 M3.8 3.4 L6.4 9.4 M12.2 3.4 L9.6 9.4 M12.2 3.4 L14.8 9.4" stroke="#e6e6e6" stroke-width="1.1" fill="none"/><path d="M0.6 9 H7 C7 12.8 0.6 12.8 0.6 9 Z M9 9 H15.4 C15.4 12.8 9 12.8 9 9 Z" fill="#dedede"/><circle cx="8" cy="1.6" r="1.4" fill="#e6e6e6"/></svg>
<svg class="box" style="left:751px;top:228px" width="15" height="13" viewBox="0 0 15 13"><defs><linearGradient id="ab" x1="0" x2="1" y1="0" y2="0"><stop offset="0" stop-color="#ffffff"/><stop offset="1" stop-color="#6a6a6a"/></linearGradient></defs><rect x="0.6" y="0.6" width="13.8" height="11.8" fill="url(#ab)" stroke="#d9d9d9" stroke-width="1.1"/><rect x="1.2" y="1.2" width="6" height="10.6" fill="#4a4a4a"/></svg>
<svg class="box" style="left:770px;top:227px" width="15" height="13" viewBox="0 0 15 13"><rect x="0.6" y="2.2" width="11.4" height="8" rx="1" fill="#9a9a9a" stroke="#d9d9d9" stroke-width="1.1"/><rect x="3" y="0.6" width="4.4" height="2" fill="#d9d9d9"/><circle cx="6.2" cy="6.2" r="2.4" fill="#4a4a4a" stroke="#d9d9d9" stroke-width="0.9"/><circle cx="11" cy="10" r="3.4" fill="#8a8a8a" stroke="#d9d9d9" stroke-width="1"/></svg>
<svg class="box" style="left:790px;top:228px" width="15" height="13" viewBox="0 0 15 13"><circle cx="7.5" cy="4.4" r="3.8" fill="#e8e8e8"/><circle cx="4.4" cy="8.8" r="3.8" fill="#dadada"/><circle cx="10.6" cy="8.8" r="3.8" fill="#cfcfcf"/><path d="M7.5 5.5 L5.6 8 L9.4 8 Z" fill="#3a3a3a"/></svg>
<svg class="box" style="left:811px;top:228px" width="15" height="13" viewBox="0 0 15 13"><rect x="0.6" y="0.6" width="13.8" height="11.8" fill="#8c8c8c" stroke="#d9d9d9" stroke-width="1.1"/><path d="M0.6 4.4 H14.4 M0.6 8.4 H14.4 M5.2 0.6 V12.4 M9.8 0.6 V12.4" stroke="#d9d9d9" stroke-width="1.1"/><rect x="1.2" y="1.2" width="3.4" height="2.6" fill="#555"/><rect x="5.8" y="1.2" width="3.4" height="2.6" fill="#555"/><rect x="10.4" y="1.2" width="3.4" height="2.6" fill="#555"/></svg>
<svg class="box" style="left:720px;top:250px" width="15" height="13" viewBox="0 0 15 13"><defs><linearGradient id="ai" x1="0" x2="1" y1="0" y2="1"><stop offset="0" stop-color="#f6f6f6"/><stop offset="1" stop-color="#6e6e6e"/></linearGradient></defs><rect x="0.6" y="0.6" width="13.8" height="11.8" fill="url(#ai)" stroke="#d9d9d9" stroke-width="1.1"/><ellipse cx="7" cy="7" rx="4" ry="2.8" transform="rotate(-40 7 7)" fill="#2c2c2c"/></svg>
<svg class="box" style="left:740px;top:250px" width="15" height="13" viewBox="0 0 15 13"><defs><linearGradient id="ap" x1="0" x2="1" y1="0" y2="1"><stop offset="0" stop-color="#6e6e6e"/><stop offset="1" stop-color="#f6f6f6"/></linearGradient></defs><rect x="0.6" y="0.6" width="13.8" height="11.8" fill="url(#ap)" stroke="#d9d9d9" stroke-width="1.1"/><path d="M1 12 L14 1" stroke="#e8e8e8" stroke-width="2.4" opacity="0.7"/></svg>
<svg class="box" style="left:761px;top:250px" width="15" height="13" viewBox="0 0 15 13"><rect x="0.6" y="0.6" width="13.8" height="11.8" fill="#d8d8d8" stroke="#d9d9d9" stroke-width="1.1"/><path d="M1 11 L4 8 L5.5 9 L8 5 L10 6.5 L14 2 L14 6 L10.5 9.5 L8.5 8 L6 11.5 L4 10.5 L2 12 Z" fill="#262626"/></svg>
<svg class="box" style="left:781px;top:250px" width="15" height="13" viewBox="0 0 15 13"><rect x="0.6" y="0.6" width="13.8" height="11.8" fill="#9a9a9a" stroke="#d9d9d9" stroke-width="1.1"/><path d="M1 1 L7.5 6.5 L1 12 Z M14 1 L7.5 6.5 L14 12 Z" fill="#d6d6d6"/></svg>
<svg class="box" style="left:801px;top:250px" width="15" height="13" viewBox="0 0 15 13"><defs><linearGradient id="ag" x1="0" x2="1" y1="0" y2="0"><stop offset="0" stop-color="#3e3e3e"/><stop offset="1" stop-color="#e6e6e6"/></linearGradient></defs><rect x="0.6" y="0.6" width="13.8" height="11.8" fill="url(#ag)" stroke="#d9d9d9" stroke-width="1.1"/></svg>
<div class="box" style="left:681px;top:270px;width:188px;height:3px;background:#383838"></div>
<div class="box" style="left:681px;top:273px;width:188px;height:347px;background:#535353"></div>
<div class="box" style="left:681px;top:273px;width:188px;height:15px;background:#404040;border-bottom:1px solid #393939"></div>
<div class="box" style="left:681px;top:273px;width:36px;height:15px;background:#535353;border-right:1px solid #343434"></div>
<div class="t" style="left:687px;top:274.5px;font-size:9px;line-height:13px;color:#f2f2f2;font-weight:bold;font-family:'Liberation Sans',sans-serif;transform:scaleX(0.827);transform-origin:0 50%;">Layers</div>
<div class="box" style="left:717px;top:273px;width:48px;height:14px;background:#434343;border-right:1px solid #343434"></div>
<div class="t" style="left:723px;top:274.5px;font-size:9px;line-height:13px;color:#a4a4a4;font-weight:bold;font-family:'Liberation Sans',sans-serif;transform:scaleX(0.864);transform-origin:0 50%;">Channels</div>
<div class="box" style="left:765px;top:273px;width:34px;height:14px;background:#434343;border-right:1px solid #343434"></div>
<div class="t" style="left:771.5px;top:274.5px;font-size:9px;line-height:13px;color:#a4a4a4;font-weight:bold;font-family:'Liberation Sans',sans-serif;transform:scaleX(0.877);transform-origin:0 50%;">Paths</div>
<svg class="box" style="left:853px;top:278px" width="11" height="7" viewBox="0 0 11 7"><path d="M0 1.5 L4 1.5 L2 4 Z" fill="#c4c4c4"/><path d="M5 0.5 H11 M5 2.5 H11 M5 4.5 H11 M5 6.5 H11" stroke="#a4a4a4" stroke-width="1"/></svg>
<div class="dd" style="left:685px;top:292px;width:58px;height:15px;background:linear-gradient(#5f5f5f,#545454)"></div>
<svg class="box" style="left:690.5px;top:294px" width="10" height="10" viewBox="0 0 10 10"><circle cx="6" cy="4" r="2.9" fill="none" stroke="#e4e4e4" stroke-width="1.7"/><path d="M4 6.2 L1 9.2" stroke="#e4e4e4" stroke-width="2"/></svg>
<div class="t" style="left:703px;top:293.5px;font-size:9.5px;line-height:12px;color:#a2a2a2;font-weight:normal;font-family:'Liberation Sans',sans-serif;transform:scaleX(0.841);transform-origin:0 50%;">Kind</div>
<svg class="box" style="left:734px;top:295.5px" width="6" height="9" viewBox="0 0 6 9"><path d="M0.6 3.6 L3 0.8 L5.4 3.6 Z M0.6 5.4 L3 8.2 L5.4 5.4 Z" fill="#a8a8a8"/></svg>
<svg class="box" style="left:753px;top:294px" width="12" height="10" viewBox="0 0 12 10"><rect x="0.6" y="0.6" width="10.8" height="8.8" fill="#4a4a4a" stroke="#e2e2e2" stroke-width="1.2"/><path d="M2 8 L4.6 5 L6.4 6.8 L8 5.6 L10 8 Z" fill="#e2e2e2"/><circle cx="8.2" cy="3.2" r="1" fill="#e2e2e2"/></svg>
<svg class="box" style="left:774px;top:294px" width="10" height="10" viewBox="0 0 10 10"><circle cx="5" cy="5" r="4.3" fill="#e2e2e2"/><path d="M8 2 A4.3 4.3 0 0 0 2 8 Z" fill="#4a4a4a" opacity="0.9"/><circle cx="5" cy="5" r="4.3" fill="none" stroke="#e2e2e2" stroke-width="1"/></svg>
<div class="t" style="left:794.5px;top:291.5px;font-size:13.5px;line-height:15px;color:#e6e6e6;font-weight:normal;font-family:'Liberation Serif',sans-serif;transform:scaleX(1.152);transform-origin:0 50%;-webkit-text-stroke:0.3px #e6e6e6;">T</div>
<svg class="box" style="left:814px;top:294px" width="11" height="11" viewBox="0 0 11 11"><rect x="1.8" y="1.8" width="7.4" height="7.4" fill="none" stroke="#e2e2e2" stroke-width="1.1"/><rect x="0" y="0" width="3.2" height="3.2" fill="#e2e2e2"/><rect x="7.8" y="0" width="3.2" height="3.2" fill="#e2e2e2"/><rect x="0" y="7.8" width="3.2" height="3.2" fill="#e2e2e2"/><rect x="7.8" y="7.8" width="3.2" height="3.2" fill="#e2e2e2"/></svg>
<svg class="box" style="left:835px;top:293px" width="11" height="12" viewBox="0 0 11 12"><path d="M3 0.6 H7.6 L10.4 3.4 V8 H3 Z" fill="#8e8e8e" stroke="#e2e2e2" stroke-width="1.1"/><rect x="0.6" y="6" width="6" height="5.4" fill="#dedede" stroke="#e2e2e2" stroke-width="1"/></svg>
<div class="box" style="left:856.5px;top:292px;width:7.5px;height:15px;background:linear-gradient(#8a8a8a 0 45%,#2c2c2c 45%);border:1px solid #2a2a2a;border-radius:1px"></div>
<div class="box" style="left:681px;top:311px;width:188px;height:1px;background:#444"></div>
<div class="dd" style="left:685px;top:315px;width:92px;height:16px;background:linear-gradient(#5f5f5f,#545454)"></div>
<div class="t" style="left:690px;top:317px;font-size:9.5px;line-height:12px;color:#9c9c9c;font-weight:normal;font-family:'Liberation Sans',sans-serif;transform:scaleX(0.882);transform-origin:0 50%;">Normal</div>
<svg class="box" style="left:768px;top:318.5px" width="6" height="9" viewBox="0 0 6 9"><path d="M0.6 3.6 L3 0.8 L5.4 3.6 Z M0.6 5.4 L3 8.2 L5.4 5.4 Z" fill="#a8a8a8"/></svg>
<div class="t" style="left:783.5px;top:317px;font-size:9.5px;line-height:12px;color:#f0f0f0;font-weight:bold;font-family:'Liberation Sans',sans-serif;transform:scaleX(0.815);transform-origin:0 50%;">Opacity:</div>
<div class="box" style="left:819px;top:315px;width:46px;height:15px;background:#474747;border:1px solid #383838;border-radius:2px"></div>
<div class="box" style="left:849px;top:316px;width:15px;height:13px;background:linear-gradient(#787878,#5e5e5e);border-left:1px solid #363636;border-radius:0 2px 2px 0"></div>
<div class="box" style="left:853.5px;top:321.5px;width:0px;height:0px;border:3px solid transparent;border-top:3.5px solid #f0f0f0;border-bottom:none;width:0;height:0"></div>
<div class="t" style="left:824px;top:316.5px;font-size:9px;line-height:12px;color:#7a7a7a;font-weight:normal;font-family:'Liberation Sans',sans-serif;transform:scaleX(0.868);transform-origin:0 50%;">100%</div>
<div class="box" style="left:819px;top:339px;width:46px;height:15px;background:#474747;border:1px solid #383838;border-radius:2px"></div>
<div class="box" style="left:849px;top:340px;width:15px;height:13px;background:linear-gradient(#787878,#5e5e5e);border-left:1px solid #363636;border-radius:0 2px 2px 0"></div>
<div class="box" style="left:853.5px;top:345.5px;width:0px;height:0px;border:3px solid transparent;border-top:3.5px solid #f0f0f0;border-bottom:none;width:0;height:0"></div>
<div class="t" style="left:824px;top:340.5px;font-size:9px;line-height:12px;color:#7a7a7a;font-weight:normal;font-family:'Liberation Sans',sans-serif;transform:scaleX(0.868);transform-origin:0 50%;">100%</div>
<div class="box" style="left:681px;top:335px;width:188px;height:1px;background:#484848"></div>
<div class="t" style="left:685.5px;top:341px;font-size:9.5px;line-height:12px;color:#f0f0f0;font-weight:bold;font-family:'Liberation Sans',sans-serif;transform:scaleX(0.769);transform-origin:0 50%;">Lock:</div>
<svg class="box" style="left:714px;top:342px" width="9" height="9" viewBox="0 0 9 9"><rect width="9" height="9" fill="#7a7a7a"/><path d="M0 0 H3 V3 H0 Z M6 0 H9 V3 H6 Z M3 3 H6 V6 H3 Z M0 6 H3 V9 H0 Z M6 6 H9 V9 H6 Z" fill="#a4a4a4"/></svg>
<svg class="box" style="left:731px;top:340px" width="13" height="12" viewBox="0 0 13 12"><path d="M12.4 0.6 L6 7.4" stroke="#9c9c9c" stroke-width="1.7" stroke-linecap="round"/><path d="M6.2 6.8 C3.6 7 4 9.4 0.8 10.8 C4 11.8 7.2 10.4 7.4 8 Z" fill="#9c9c9c"/></svg>
<svg class="box" style="left:750px;top:341px" width="11" height="11" viewBox="0 0 11 11"><path d="M5.5 1 V10 M1 5.5 H10" stroke="#e6e6e6" stroke-width="1.2"/><path d="M5.5 0 L7.4 2.4 H3.6 Z M5.5 11 L7.4 8.6 H3.6 Z M0 5.5 L2.4 3.6 V7.4 Z M11 5.5 L8.6 3.6 V7.4 Z" fill="#e6e6e6"/></svg>
<svg class="box" style="left:770px;top:340px" width="10" height="12" viewBox="0 0 10 12"><rect x="0.5" y="5.2" width="9" height="6.4" rx="0.8" fill="#e4e4e4"/><path d="M2.6 5.4 V3.4 C2.6 0.4 7.4 0.4 7.4 3.4 V5.4" fill="none" stroke="#e4e4e4" stroke-width="1.5"/><circle cx="5" cy="8.2" r="1" fill="#4a4a4a"/></svg>
<div class="t" style="left:803px;top:341px;font-size:9.5px;line-height:12px;color:#f0f0f0;font-weight:bold;font-family:'Liberation Sans',sans-serif;transform:scaleX(0.681);transform-origin:0 50%;">Fill:</div>
<div class="box" style="left:858px;top:358px;width:11px;height:245px;background:#444;border-left:1px solid #3a3a3a"></div>
<div class="box" style="left:681px;top:393px;width:176px;height:1px;background:#404040"></div>
<div class="box" style="left:681px;top:427px;width:176px;height:1px;background:#404040"></div>
<div class="box" style="left:681px;top:461px;width:176px;height:1px;background:#404040"></div>
<div class="box" style="left:681px;top:494px;width:176px;height:1px;background:#404040"></div>
<div class="box" style="left:681px;top:528px;width:176px;height:1px;background:#404040"></div>
<div class="box" style="left:681px;top:562px;width:176px;height:1px;background:#404040"></div>
<div class="box" style="left:681px;top:596px;width:176px;height:1px;background:#404040"></div>
<div class="box" style="left:681px;top:602px;width:176px;height:1px;background:#404040"></div>
<div class="box" style="left:706px;top:358px;width:1px;height:245px;background:#404040"></div>
<div class="box" style="left:681px;top:358px;width:176px;height:1px;background:#404040"></div>
<div class="box" style="left:707px;top:359px;width:150px;height:34px;background:#6b7d95"></div>
<svg class="box" style="left:688.5px;top:371.4px" width="11" height="7.3" viewBox="0 0 12 8"><path d="M0.2 4 C2.4 -0.9 9.6 -0.9 11.8 4 C9.6 8.9 2.4 8.9 0.2 4 Z" fill="#dedede"/><circle cx="6" cy="3.9" r="2.5" fill="#484848"/><circle cx="6.6" cy="3.3" r="1" fill="#dedede"/></svg>
<svg class="box" style="left:688.5px;top:406.4px" width="11" height="7.3" viewBox="0 0 12 8"><path d="M0.2 4 C2.4 -0.9 9.6 -0.9 11.8 4 C9.6 8.9 2.4 8.9 0.2 4 Z" fill="#dedede"/><circle cx="6" cy="3.9" r="2.5" fill="#484848"/><circle cx="6.6" cy="3.3" r="1" fill="#dedede"/></svg>
<svg class="box" style="left:688.5px;top:440.4px" width="11" height="7.3" viewBox="0 0 12 8"><path d="M0.2 4 C2.4 -0.9 9.6 -0.9 11.8 4 C9.6 8.9 2.4 8.9 0.2 4 Z" fill="#dedede"/><circle cx="6" cy="3.9" r="2.5" fill="#484848"/><circle cx="6.6" cy="3.3" r="1" fill="#dedede"/></svg>
<svg class="box" style="left:688.5px;top:474.4px" width="11" height="7.3" viewBox="0 0 12 8"><path d="M0.2 4 C2.4 -0.9 9.6 -0.9 11.8 4 C9.6 8.9 2.4 8.9 0.2 4 Z" fill="#dedede"/><circle cx="6" cy="3.9" r="2.5" fill="#484848"/><circle cx="6.6" cy="3.3" r="1" fill="#dedede"/></svg>
<svg class="box" style="left:688.5px;top:507.4px" width="11" height="7.3" viewBox="0 0 12 8"><path d="M0.2 4 C2.4 -0.9 9.6 -0.9 11.8 4 C9.6 8.9 2.4 8.9 0.2 4 Z" fill="#dedede"/><circle cx="6" cy="3.9" r="2.5" fill="#484848"/><circle cx="6.6" cy="3.3" r="1" fill="#dedede"/></svg>
<svg class="box" style="left:688.5px;top:541.4px" width="11" height="7.3" viewBox="0 0 12 8"><path d="M0.2 4 C2.4 -0.9 9.6 -0.9 11.8 4 C9.6 8.9 2.4 8.9 0.2 4 Z" fill="#dedede"/><circle cx="6" cy="3.9" r="2.5" fill="#484848"/><circle cx="6.6" cy="3.3" r="1" fill="#dedede"/></svg>
<svg class="box" style="left:688.5px;top:575.4px" width="11" height="7.3" viewBox="0 0 12 8"><path d="M0.2 4 C2.4 -0.9 9.6 -0.9 11.8 4 C9.6 8.9 2.4 8.9 0.2 4 Z" fill="#dedede"/><circle cx="6" cy="3.9" r="2.5" fill="#484848"/><circle cx="6.6" cy="3.3" r="1" fill="#dedede"/></svg>
<div class="box" style="left:708px;top:361px;width:30.5px;height:31px;background:#f2f2f2"></div>
<div class="box" style="left:709px;top:362px;width:28.5px;height:29px;background:#51627b"></div>
<div class="box" style="left:714px;top:361px;width:18.5px;height:1px;background:#6b7d95"></div>
<div class="box" style="left:714px;top:391px;width:18.5px;height:1px;background:#6b7d95"></div>
<div class="box" style="left:708px;top:367px;width:1px;height:19px;background:#6b7d95"></div>
<div class="box" style="left:737.5px;top:367px;width:1px;height:19px;background:#6b7d95"></div>
<div class="box" style="left:710.5px;top:363px;width:25.5px;height:19.5px;background:#f59a15;border:1px solid #33373d"></div>
<div class="box" style="left:710.5px;top:382.5px;width:25.5px;height:7px;background:linear-gradient(#bcbcbc,#e0e0e0);border:1px solid #3c4149"></div>
<div class="box" style="left:713px;top:385px;width:21px;height:1px;background:#666"></div>
<div class="box" style="left:721px;top:385px;width:0px;height:0px;border:2.5px solid transparent;border-bottom:3px solid #222;border-top:none;width:0;height:0"></div>
<svg class="box" style="left:739.5px;top:369.5px" width="7" height="11.5" viewBox="0 0 7 11.5"><path d="M1 4.6 V2.8 C1 0.4 6 0.4 6 2.8 V4.6 M1 6.9 V8.7 C1 11.1 6 11.1 6 8.7 V6.9" fill="none" stroke="#e2e2e2" stroke-width="1.5"/><path d="M3.5 3.4 V8.1" stroke="#e2e2e2" stroke-width="1.5"/></svg>
<div class="box" style="left:749px;top:362px;width:19px;height:29px;background:#fff;border:1px solid #1e1e1e"></div>
<div class="t" style="left:776px;top:371.5px;font-size:9.5px;line-height:12px;color:#f4f4f4;font-weight:normal;font-family:'Liberation Sans',sans-serif;transform:scaleX(0.826);transform-origin:0 50%;">Color Fill 1</div>
<svg class="box" style="left:714.5px;top:406.5px" width="6.5" height="7.5" viewBox="0 0 7 8"><path d="M5.8 0.8 H3.2 V5" fill="none" stroke="#d8d8d8" stroke-width="1.2"/><path d="M0.4 3.9 L6 3.9 L3.2 7.2 Z" fill="#d8d8d8"/></svg>
<svg class="box" style="left:729px;top:405px" width="16" height="12" viewBox="0 0 16 12"><path d="M8 0.5 V3 M2.5 3 H13.5 M3.8 3 L1.2 9 M3.8 3 L6.4 9 M12.2 3 L9.6 9 M12.2 3 L14.8 9" stroke="#e0e0e0" stroke-width="1.1" fill="none"/><path d="M0.6 8.6 H7 C7 12.2 0.6 12.2 0.6 8.6 Z M9 8.6 H15.4 C15.4 12.2 9 12.2 9 8.6 Z" fill="#d8d8d8"/><circle cx="8" cy="1.4" r="1.3" fill="#e0e0e0"/></svg>
<svg class="box" style="left:752.5px;top:404.5px" width="7" height="11.5" viewBox="0 0 7 11.5"><path d="M1 4.6 V2.8 C1 0.4 6 0.4 6 2.8 V4.6 M1 6.9 V8.7 C1 11.1 6 11.1 6 8.7 V6.9" fill="none" stroke="#e2e2e2" stroke-width="1.5"/><path d="M3.5 3.4 V8.1" stroke="#e2e2e2" stroke-width="1.5"/></svg>
<div class="box" style="left:763px;top:397px;width:19px;height:28px;background:#fff;border:1px solid #1e1e1e"></div>
<div class="t" style="left:790px;top:406px;font-size:9.5px;line-height:12px;color:#f0f0f0;font-weight:normal;font-family:'Liberation Sans',sans-serif;transform:scaleX(0.834);transform-origin:0 50%;">Color Balan...</div>
<svg class="box" style="left:714.5px;top:440.5px" width="6.5" height="7.5" viewBox="0 0 7 8"><path d="M5.8 0.8 H3.2 V5" fill="none" stroke="#d8d8d8" stroke-width="1.2"/><path d="M0.4 3.9 L6 3.9 L3.2 7.2 Z" fill="#d8d8d8"/></svg>
<svg class="box" style="left:729.5px;top:439px" width="14.5" height="11" viewBox="0 0 14.5 11"><defs><linearGradient id="hs440" x1="0" x2="1"><stop offset="0" stop-color="#4a4a4a"/><stop offset="1" stop-color="#e8e8e8"/></linearGradient></defs><rect x="0.5" y="0.5" width="13.5" height="10" fill="#cfcfcf" stroke="#e2e2e2"/><rect x="1" y="5" width="12.5" height="5" fill="url(#hs440)"/><path d="M4.8 1 V4.6 M9.2 1 V4.6" stroke="#8a8a8a" stroke-width="1.6"/></svg>
<svg class="box" style="left:751.5px;top:438.5px" width="7" height="11.5" viewBox="0 0 7 11.5"><path d="M1 4.6 V2.8 C1 0.4 6 0.4 6 2.8 V4.6 M1 6.9 V8.7 C1 11.1 6 11.1 6 8.7 V6.9" fill="none" stroke="#e2e2e2" stroke-width="1.5"/><path d="M3.5 3.4 V8.1" stroke="#e2e2e2" stroke-width="1.5"/></svg>
<div class="box" style="left:763px;top:430px;width:19px;height:28px;background:#000;border:1px solid #1e1e1e"></div>
<svg class="box" style="left:763px;top:431px" width="19" height="27" viewBox="0 0 19 27"><g fill="none" stroke="#fff" stroke-linecap="round" stroke-linejoin="round"><path d="M10.6 9 L10 16.5 L10.4 23" stroke-width="1.3"/><path d="M10.4 10 L13.4 6.6 L14.6 3.6" stroke-width="1"/><path d="M10.4 10.4 L7.6 12.6 L5.6 12.2" stroke-width="1"/><path d="M10 16 L6.4 18.4 L3.4 19.6" stroke-width="1.1"/></g><circle cx="10.9" cy="7.6" r="1.2" fill="#fff"/><path d="M7.6 15.6 L10.2 13 L12.8 15.8 Z" fill="#fff"/></svg>
<div class="t" style="left:790px;top:440px;font-size:9.5px;line-height:12px;color:#f0f0f0;font-weight:normal;font-family:'Liberation Sans',sans-serif;transform:scaleX(0.904);transform-origin:0 50%;">Hue/Saturat...</div>
<svg class="box" style="left:714.5px;top:474.5px" width="6.5" height="7.5" viewBox="0 0 7 8"><path d="M5.8 0.8 H3.2 V5" fill="none" stroke="#d8d8d8" stroke-width="1.2"/><path d="M0.4 3.9 L6 3.9 L3.2 7.2 Z" fill="#d8d8d8"/></svg>
<div class="box" style="left:722px;top:464px;width:20px;height:28px;background:#f5a21e;border:1px solid #3a3a3a"></div>
<svg class="box" style="left:722px;top:465px" width="20" height="27" viewBox="0 0 19 27"><g fill="none" stroke="#fff6e0" stroke-linecap="round" stroke-linejoin="round"><path d="M10.6 9 L10 16.5 L10.4 23" stroke-width="1.3"/><path d="M10.4 10 L13.4 6.6 L14.6 3.6" stroke-width="1"/><path d="M10.4 10.4 L7.6 12.6 L5.6 12.2" stroke-width="1"/><path d="M10 16 L6.4 18.4 L3.4 19.6" stroke-width="1.1"/></g><circle cx="10.9" cy="7.6" r="1.2" fill="#fff6e0"/><path d="M7.6 15.6 L10.2 13 L12.8 15.8 Z" fill="#fff6e0"/></svg>
<div class="t" style="left:750.5px;top:474px;font-size:9.5px;line-height:12px;color:#f0f0f0;font-weight:normal;font-family:'Liberation Sans',sans-serif;transform:scaleX(0.890);transform-origin:0 50%;">Layer 0's Inner Gl...</div>
<svg class="box" style="left:831.5px;top:474px" width="10" height="10" viewBox="0 0 10 10"><rect x="3.2" y="0.6" width="6.2" height="6.2" fill="none" stroke="#c8c8c8" stroke-width="1.1"/><rect x="0.6" y="3.2" width="6.2" height="6.2" fill="#6a6a6a" stroke="#c8c8c8" stroke-width="1.1"/><rect x="2.4" y="5" width="2.6" height="2.6" fill="#c8c8c8"/></svg>
<div class="box" style="left:709px;top:498px;width:20px;height:28px;background:#ededed;border:1px solid #3a3a3a"></div>
<svg class="box" style="left:710px;top:499px" width="18" height="26" viewBox="0 0 19 27"><g fill="none" stroke="#dcc0b8" stroke-linecap="round" stroke-linejoin="round"><path d="M10.6 9 L10 16.5 L10.4 23" stroke-width="1.3"/><path d="M10.4 10 L13.4 6.6 L14.6 3.6" stroke-width="1"/><path d="M10.4 10.4 L7.6 12.6 L5.6 12.2" stroke-width="1"/><path d="M10 16 L6.4 18.4 L3.4 19.6" stroke-width="1.1"/></g><circle cx="10.9" cy="7.6" r="1.2" fill="#dcc0b8"/><path d="M7.6 15.6 L10.2 13 L12.8 15.8 Z" fill="#dcc0b8"/></svg>
<svg class="box" style="left:730.5px;top:505.5px" width="7" height="11.5" viewBox="0 0 7 11.5"><path d="M1 4.6 V2.8 C1 0.4 6 0.4 6 2.8 V4.6 M1 6.9 V8.7 C1 11.1 6 11.1 6 8.7 V6.9" fill="none" stroke="#e2e2e2" stroke-width="1.5"/><path d="M3.5 3.4 V8.1" stroke="#e2e2e2" stroke-width="1.5"/></svg>
<div class="box" style="left:740px;top:498px;width:20px;height:28px;background:#000;border:1px solid #1e1e1e"></div>
<svg class="box" style="left:740px;top:499px" width="20" height="27" viewBox="0 0 19 27"><g fill="none" stroke="#fff" stroke-linecap="round" stroke-linejoin="round"><path d="M10.6 9 L10 16.5 L10.4 23" stroke-width="1.3"/><path d="M10.4 10 L13.4 6.6 L14.6 3.6" stroke-width="1"/><path d="M10.4 10.4 L7.6 12.6 L5.6 12.2" stroke-width="1"/><path d="M10 16 L6.4 18.4 L3.4 19.6" stroke-width="1.1"/></g><circle cx="10.9" cy="7.6" r="1.2" fill="#fff"/><path d="M7.6 15.6 L10.2 13 L12.8 15.8 Z" fill="#fff"/></svg>
<div class="t" style="left:767px;top:507px;font-size:9.5px;line-height:12px;color:#f0f0f0;font-weight:normal;font-family:'Liberation Sans',sans-serif;transform:scaleX(0.947);transform-origin:0 50%;text-decoration:underline;">Layer 0</div>
<svg class="box" style="left:831.5px;top:507px" width="10" height="10" viewBox="0 0 10 10"><rect x="3.2" y="0.6" width="6.2" height="6.2" fill="none" stroke="#c8c8c8" stroke-width="1.1"/><rect x="0.6" y="3.2" width="6.2" height="6.2" fill="#6a6a6a" stroke="#c8c8c8" stroke-width="1.1"/><rect x="2.4" y="5" width="2.6" height="2.6" fill="#c8c8c8"/></svg>
<div class="box" style="left:709px;top:532px;width:20px;height:28px;background:repeating-conic-gradient(#b8b8b8 0 25%,#ececec 0 50%) 0 0/6px 6px;border:1px solid #3a3a3a"></div>
<svg class="box" style="left:710px;top:533px" width="18" height="26" viewBox="0 0 18 26"><path d="M11 2 C7 5 12 8 8 12 C6 15 10 18 7 23 L5 22 C7 18 4 15 6 11 C9 8 5 5 9 2 Z" fill="#2a2a2a" opacity="0.85"/></svg>
<div class="t" style="left:736.5px;top:541px;font-size:9.5px;line-height:12px;color:#f0f0f0;font-weight:normal;font-family:'Liberation Sans',sans-serif;transform:scaleX(0.865);transform-origin:0 50%;">sparks_2_by_mariasemel...</div>
<svg class="box" style="left:714.5px;top:575.5px" width="6.5" height="7.5" viewBox="0 0 7 8"><path d="M5.8 0.8 H3.2 V5" fill="none" stroke="#d8d8d8" stroke-width="1.2"/><path d="M0.4 3.9 L6 3.9 L3.2 7.2 Z" fill="#d8d8d8"/></svg>
<svg class="box" style="left:729.5px;top:574px" width="14.5" height="11" viewBox="0 0 14.5 11"><defs><linearGradient id="hs575" x1="0" x2="1"><stop offset="0" stop-color="#4a4a4a"/><stop offset="1" stop-color="#e8e8e8"/></linearGradient></defs><rect x="0.5" y="0.5" width="13.5" height="10" fill="#cfcfcf" stroke="#e2e2e2"/><rect x="1" y="5" width="12.5" height="5" fill="url(#hs575)"/><path d="M4.8 1 V4.6 M9.2 1 V4.6" stroke="#8a8a8a" stroke-width="1.6"/></svg>
<svg class="box" style="left:751.5px;top:573.5px" width="7" height="11.5" viewBox="0 0 7 11.5"><path d="M1 4.6 V2.8 C1 0.4 6 0.4 6 2.8 V4.6 M1 6.9 V8.7 C1 11.1 6 11.1 6 8.7 V6.9" fill="none" stroke="#e2e2e2" stroke-width="1.5"/><path d="M3.5 3.4 V8.1" stroke="#e2e2e2" stroke-width="1.5"/></svg>
<div class="box" style="left:763px;top:565px;width:19px;height:28px;background:#fff;border:1px solid #1e1e1e"></div>
<div class="t" style="left:790px;top:575px;font-size:9.5px;line-height:12px;color:#f0f0f0;font-weight:normal;font-family:'Liberation Sans',sans-serif;transform:scaleX(0.904);transform-origin:0 50%;">Hue/Saturat...</div>
<div class="box" style="left:722px;top:599px;width:4px;height:3px;background:#2a2a2a"></div>
<div class="box" style="left:681px;top:603px;width:188px;height:17px;background:#535353;border-top:1px solid #3a3a3a"></div>
<svg class="box" style="left:697px;top:608px" width="12" height="6" viewBox="0 0 12 6"><rect x="0.6" y="0.6" width="6.4" height="4.8" rx="2.4" fill="none" stroke="#bdbdbd" stroke-width="1.2"/><rect x="5" y="0.6" width="6.4" height="4.8" rx="2.4" fill="none" stroke="#bdbdbd" stroke-width="1.2"/></svg>
<div class="t" style="left:721px;top:604px;font-size:12.5px;line-height:14px;color:#e0e0e0;font-weight:normal;font-family:'Liberation Sans',sans-serif;transform:scaleX(1.079);transform-origin:0 50%;font-style:italic;">fx</div>
<div class="box" style="left:733px;top:615px;width:2px;height:2px;background:#d0d0d0"></div>
<svg class="box" style="left:742px;top:606px" width="13" height="10" viewBox="0 0 13 10"><rect x="0.5" y="0.5" width="12" height="9" fill="#dcdcdc"/><circle cx="6.5" cy="5" r="2.6" fill="#3c3c3c"/></svg>
<svg class="box" style="left:766px;top:606px" width="10" height="10" viewBox="0 0 10 10"><circle cx="5" cy="5" r="4.2" fill="#e2e2e2"/><path d="M8 2 A4.2 4.2 0 0 1 2 8 Z" fill="#3e3e3e"/><circle cx="5" cy="5" r="4.2" fill="none" stroke="#e2e2e2" stroke-width="1"/></svg>
<div class="box" style="left:778px;top:615px;width:2px;height:2px;background:#d0d0d0"></div>
<svg class="box" style="left:788px;top:606px" width="12" height="10" viewBox="0 0 12 10"><path d="M0.4 1.4 H4.6 L5.8 2.8 H11.6 V9.6 H0.4 Z" fill="#d8d8d8"/></svg>
<svg class="box" style="left:811px;top:606px" width="10" height="10" viewBox="0 0 10 10"><path d="M0.5 0.5 H9.5 V9.5 H3.8 V4 H0.5 Z" fill="#dcdcdc"/><path d="M0.5 5.2 L3 5.2 L3 8 Z" fill="#dcdcdc"/></svg>
<svg class="box" style="left:833px;top:605px" width="11" height="12" viewBox="0 0 11 12"><path d="M1.6 3.6 H9.4 L8.8 11.4 H2.2 Z" fill="none" stroke="#d8d8d8" stroke-width="1.2"/><path d="M0.4 2.6 H10.6 M3.6 2.4 V0.8 H7.4 V2.4 M4.2 5 V10 M6.8 5 V10" stroke="#d8d8d8" stroke-width="1.1" fill="none"/></svg>
<div class="box" style="left:680px;top:357.5px;width:179.5px;height:37px;border:2.5px solid #e21d2a;border-bottom-width:3.4px"></div>
<div class="box" style="left:758px;top:601.5px;width:27.5px;height:18px;border:2.5px solid #e21d2a"></div>
<div class="box" style="left:214px;top:250px;width:461px;height:299px;background:#e6edf5;border:1px solid #39424d;border-radius:6px 6px 2px 2px;box-shadow:0 1px 3px rgba(0,0,0,.45)"></div>
<div class="box" style="left:215px;top:251px;width:459px;height:21px;background:linear-gradient(#a2bad8,#b3c8e2 50%,#c6d8ec);border-radius:5px 5px 0 0;border-top:1px solid #eef4fa"></div>
<div class="box" style="left:217px;top:272px;width:455px;height:274px;background:#eeeeee"></div>
<div class="t" style="left:220.5px;top:255px;font-size:11.5px;line-height:14px;color:#1a1a1a;font-weight:normal;font-family:'Liberation Sans',sans-serif;transform:scaleX(0.859);transform-origin:0 50%;">Color Picker (Solid Color)</div>
<div class="box" style="left:644.5px;top:255px;width:25.5px;height:14px;border:1px solid #6a3a36;border-radius:3px;background:linear-gradient(#eeb5a8 0,#dd8b7c 45%,#c95a44 50%,#d98268 100%);box-shadow:inset 0 0 0 1px rgba(255,255,255,.5)"></div>
<svg class="box" style="left:653px;top:258px" width="9" height="8" viewBox="0 0 9 8"><path d="M1.2 1 L7.8 7 M7.8 1 L1.2 7" stroke="#7a3a30" stroke-width="3" stroke-linecap="round"/><path d="M1.2 1 L7.8 7 M7.8 1 L1.2 7" stroke="#fff" stroke-width="1.7" stroke-linecap="round"/></svg>
<div class="box" style="left:225.5px;top:297px;width:219.5px;height:218px;border:1px solid #8a8a8a;background:linear-gradient(to top,#000,rgba(0,0,0,0)),linear-gradient(to right,#fff,#ff9d00)"></div>
<svg class="box" style="left:430px;top:302px" width="11" height="11" viewBox="0 0 11 11"><circle cx="5.5" cy="5.5" r="4.4" fill="none" stroke="#231a0a" stroke-width="1.2"/></svg>
<div class="box" style="left:454px;top:297px;width:18px;height:218px;border:1px solid #b4b4b4;background:linear-gradient(#ff0000 0%,#ff00ff 16.6%,#0000ff 33.3%,#00ffff 50%,#00ff00 66.6%,#ffff00 83.3%,#ff0000 100%)"></div>
<svg class="box" style="left:445px;top:487px" width="8" height="10" viewBox="0 0 8 10"><path d="M0.6 0.8 L7 5 L0.6 9.2 Z" fill="#fff" stroke="#6a6a6a" stroke-width="1"/></svg>
<svg class="box" style="left:472px;top:487px" width="8" height="10" viewBox="0 0 8 10"><path d="M7.4 0.8 L1 5 L7.4 9.2 Z" fill="#fff" stroke="#6a6a6a" stroke-width="1"/></svg>
<div class="t" style="left:497px;top:285.5px;font-size:11.5px;line-height:14px;color:#1c1c1c;font-weight:normal;font-family:'Liberation Sans',sans-serif;transform:scaleX(0.947);transform-origin:0 50%;">new</div>
<div class="box" style="left:482px;top:300px;width:52px;height:59px;background:#f59a15;border:1px solid #17120a"></div>
<div class="t" style="left:491px;top:359.5px;font-size:11.5px;line-height:14px;color:#1c1c1c;font-weight:normal;font-family:'Liberation Sans',sans-serif;transform:scaleX(0.922);transform-origin:0 50%;">current</div>
<svg class="box" style="left:541px;top:333px" width="11" height="11" viewBox="0 0 11 11"><path d="M5.5 0.6 L10.2 2.8 L10.2 8 L5.5 10.4 L0.8 8 L0.8 2.8 Z" fill="#8a8a8a" stroke="#1e1e1e" stroke-width="1.1"/><path d="M0.8 2.8 L5.5 5.2 L10.2 2.8 M5.5 5.2 V10.4" stroke="#1e1e1e" stroke-width="1" fill="none"/><path d="M5.5 0.8 L10 2.8 L5.5 5 L1 2.8 Z" fill="#f4f4f4"/></svg>
<div class="box" style="left:541px;top:346px;width:12px;height:12px;background:#f59a15;border:1px solid #9a9a9a"></div>
<div class="box" style="left:566px;top:281px;width:96px;height:15px;border:1px solid #3c7fb1;border-radius:3px;background:linear-gradient(#f3f8fc 0 45%,#d9e8f4 50%,#c6dced);box-shadow:inset 0 0 0 1px #48d8fb"></div>
<div class="t" style="left:607.0px;top:281.5px;font-size:11.5px;line-height:14px;color:#1c1c1c;font-weight:normal;font-family:'Liberation Sans',sans-serif;transform:scaleX(0.842);transform-origin:0 50%;">OK</div>
<div class="box" style="left:566px;top:305px;width:96px;height:15px;border:1px solid #707070;border-radius:3px;background:linear-gradient(#f4f4f4 0 45%,#e0e0e0 50%,#d2d2d2);box-shadow:inset 0 0 0 1px #fcfcfc"></div>
<div class="t" style="left:599.0px;top:305.5px;font-size:11.5px;line-height:14px;color:#1c1c1c;font-weight:normal;font-family:'Liberation Sans',sans-serif;transform:scaleX(0.838);transform-origin:0 50%;">Cancel</div>
<div class="box" style="left:566px;top:334px;width:96px;height:15px;border:1px solid #707070;border-radius:3px;background:linear-gradient(#f4f4f4 0 45%,#e0e0e0 50%,#d2d2d2);box-shadow:inset 0 0 0 1px #fcfcfc"></div>
<div class="t" style="left:574.0px;top:334.5px;font-size:11.5px;line-height:14px;color:#1c1c1c;font-weight:normal;font-family:'Liberation Sans',sans-serif;transform:scaleX(0.927);transform-origin:0 50%;">Add to Swatches</div>
<div class="box" style="left:566px;top:363px;width:96px;height:15px;border:1px solid #707070;border-radius:3px;background:linear-gradient(#f4f4f4 0 45%,#e0e0e0 50%,#d2d2d2);box-shadow:inset 0 0 0 1px #fcfcfc"></div>
<div class="t" style="left:582.5px;top:363.5px;font-size:11.5px;line-height:14px;color:#1c1c1c;font-weight:normal;font-family:'Liberation Sans',sans-serif;transform:scaleX(0.842);transform-origin:0 50%;">Color Libraries</div>
<div class="box" style="left:481.8px;top:395.8px;width:10.4px;height:10.4px;border-radius:50%;border:1px solid #a0a1a2;background:radial-gradient(circle at 40% 35%,#ffffff,#e4e6e8 60%,#cfd2d5)"></div>
<div class="box" style="left:484.3px;top:398.3px;width:5.4px;height:5.4px;border-radius:50%;background:radial-gradient(circle at 35% 30%,#6fc0ee,#1a5a98 70%)"></div>
<div class="t" style="left:495.5px;top:394px;font-size:11.5px;line-height:14px;color:#1c1c1c;font-weight:normal;font-family:'Liberation Sans',sans-serif;transform:scaleX(0.870);transform-origin:0 50%;">H:</div>
<div class="box" style="left:516px;top:393px;width:31px;height:16px;background:#fff;border:1px solid #e2e6ea;border-top-color:#c9ccd0"></div>
<div class="t" style="left:521px;top:394px;font-size:11.5px;line-height:14px;color:#1c1c1c;font-weight:normal;font-family:'Liberation Sans',sans-serif;">37</div>
<div class="t" style="left:550px;top:392px;font-size:11.5px;line-height:14px;color:#1c1c1c;font-weight:normal;font-family:'Liberation Sans',sans-serif;transform:scaleX(1.085);transform-origin:0 50%;">°</div>
<div class="box" style="left:481.8px;top:415.8px;width:10.4px;height:10.4px;border-radius:50%;border:1px solid #a0a1a2;background:radial-gradient(circle at 40% 35%,#ffffff,#e4e6e8 60%,#cfd2d5)"></div>
<div class="t" style="left:495.5px;top:414px;font-size:11.5px;line-height:14px;color:#1c1c1c;font-weight:normal;font-family:'Liberation Sans',sans-serif;transform:scaleX(0.920);transform-origin:0 50%;">S:</div>
<div class="box" style="left:516px;top:413px;width:31px;height:16px;background:#fff;border:1px solid #e2e6ea;border-top-color:#c9ccd0"></div>
<div class="t" style="left:521px;top:414px;font-size:11.5px;line-height:14px;color:#1c1c1c;font-weight:normal;font-family:'Liberation Sans',sans-serif;">97</div>
<div class="t" style="left:550px;top:414px;font-size:11.5px;line-height:14px;color:#1c1c1c;font-weight:normal;font-family:'Liberation Sans',sans-serif;transform:scaleX(0.928);transform-origin:0 50%;">%</div>
<div class="box" style="left:481.8px;top:435.8px;width:10.4px;height:10.4px;border-radius:50%;border:1px solid #a0a1a2;background:radial-gradient(circle at 40% 35%,#ffffff,#e4e6e8 60%,#cfd2d5)"></div>
<div class="t" style="left:495.5px;top:434px;font-size:11.5px;line-height:14px;color:#1c1c1c;font-weight:normal;font-family:'Liberation Sans',sans-serif;transform:scaleX(0.920);transform-origin:0 50%;">B:</div>
<div class="box" style="left:516px;top:433px;width:31px;height:16px;background:#fff;border:1px solid #e2e6ea;border-top-color:#c9ccd0"></div>
<div class="t" style="left:521px;top:434px;font-size:11.5px;line-height:14px;color:#1c1c1c;font-weight:normal;font-family:'Liberation Sans',sans-serif;">96</div>
<div class="t" style="left:550px;top:434px;font-size:11.5px;line-height:14px;color:#1c1c1c;font-weight:normal;font-family:'Liberation Sans',sans-serif;transform:scaleX(0.928);transform-origin:0 50%;">%</div>
<div class="box" style="left:481.8px;top:459.8px;width:10.4px;height:10.4px;border-radius:50%;border:1px solid #a0a1a2;background:radial-gradient(circle at 40% 35%,#ffffff,#e4e6e8 60%,#cfd2d5)"></div>
<div class="t" style="left:495.5px;top:458px;font-size:11.5px;line-height:14px;color:#1c1c1c;font-weight:normal;font-family:'Liberation Sans',sans-serif;transform:scaleX(0.870);transform-origin:0 50%;">R:</div>
<div class="box" style="left:516px;top:457px;width:31px;height:16px;background:#fff;border:1px solid #e2e6ea;border-top-color:#c9ccd0"></div>
<div class="t" style="left:521px;top:458px;font-size:11.5px;line-height:14px;color:#1c1c1c;font-weight:normal;font-family:'Liberation Sans',sans-serif;">246</div>
<div class="box" style="left:481.8px;top:479.8px;width:10.4px;height:10.4px;border-radius:50%;border:1px solid #a0a1a2;background:radial-gradient(circle at 40% 35%,#ffffff,#e4e6e8 60%,#cfd2d5)"></div>
<div class="t" style="left:495.5px;top:478px;font-size:11.5px;line-height:14px;color:#1c1c1c;font-weight:normal;font-family:'Liberation Sans',sans-serif;transform:scaleX(0.824);transform-origin:0 50%;">G:</div>
<div class="box" style="left:516px;top:477px;width:31px;height:16px;background:#fff;border:1px solid #e2e6ea;border-top-color:#c9ccd0"></div>
<div class="t" style="left:521px;top:478px;font-size:11.5px;line-height:14px;color:#1c1c1c;font-weight:normal;font-family:'Liberation Sans',sans-serif;">153</div>
<div class="box" style="left:481.8px;top:499.8px;width:10.4px;height:10.4px;border-radius:50%;border:1px solid #a0a1a2;background:radial-gradient(circle at 40% 35%,#ffffff,#e4e6e8 60%,#cfd2d5)"></div>
<div class="t" style="left:495.5px;top:498px;font-size:11.5px;line-height:14px;color:#1c1c1c;font-weight:normal;font-family:'Liberation Sans',sans-serif;transform:scaleX(0.920);transform-origin:0 50%;">B:</div>
<div class="box" style="left:516px;top:497px;width:31px;height:16px;background:#fff;border:1px solid #e2e6ea;border-top-color:#c9ccd0"></div>
<div class="t" style="left:521px;top:498px;font-size:11.5px;line-height:14px;color:#1c1c1c;font-weight:normal;font-family:'Liberation Sans',sans-serif;">7</div>
<div class="box" style="left:577.3px;top:395.8px;width:10.4px;height:10.4px;border-radius:50%;border:1px solid #a0a1a2;background:radial-gradient(circle at 40% 35%,#ffffff,#e4e6e8 60%,#cfd2d5)"></div>
<div class="t" style="left:591px;top:394px;font-size:11.5px;line-height:14px;color:#1c1c1c;font-weight:normal;font-family:'Liberation Sans',sans-serif;transform:scaleX(0.938);transform-origin:0 50%;">L:</div>
<div class="box" style="left:611px;top:393px;width:36px;height:16px;background:#fff;border:1px solid #e2e6ea;border-top-color:#c9ccd0"></div>
<div class="t" style="left:616px;top:394px;font-size:11.5px;line-height:14px;color:#1c1c1c;font-weight:normal;font-family:'Liberation Sans',sans-serif;">72</div>
<div class="box" style="left:577.3px;top:415.8px;width:10.4px;height:10.4px;border-radius:50%;border:1px solid #a0a1a2;background:radial-gradient(circle at 40% 35%,#ffffff,#e4e6e8 60%,#cfd2d5)"></div>
<div class="t" style="left:591px;top:414px;font-size:11.5px;line-height:14px;color:#1c1c1c;font-weight:normal;font-family:'Liberation Sans',sans-serif;transform:scaleX(0.938);transform-origin:0 50%;">a:</div>
<div class="box" style="left:611px;top:413px;width:36px;height:16px;background:#fff;border:1px solid #e2e6ea;border-top-color:#c9ccd0"></div>
<div class="t" style="left:616px;top:414px;font-size:11.5px;line-height:14px;color:#1c1c1c;font-weight:normal;font-family:'Liberation Sans',sans-serif;">30</div>
<div class="box" style="left:577.3px;top:435.8px;width:10.4px;height:10.4px;border-radius:50%;border:1px solid #a0a1a2;background:radial-gradient(circle at 40% 35%,#ffffff,#e4e6e8 60%,#cfd2d5)"></div>
<div class="t" style="left:591px;top:434px;font-size:11.5px;line-height:14px;color:#1c1c1c;font-weight:normal;font-family:'Liberation Sans',sans-serif;transform:scaleX(0.938);transform-origin:0 50%;">b:</div>
<div class="box" style="left:611px;top:433px;width:36px;height:16px;background:#fff;border:1px solid #e2e6ea;border-top-color:#c9ccd0"></div>
<div class="t" style="left:616px;top:434px;font-size:11.5px;line-height:14px;color:#1c1c1c;font-weight:normal;font-family:'Liberation Sans',sans-serif;">75</div>
<div class="t" style="left:597.5px;top:458px;font-size:11.5px;line-height:14px;color:#1c1c1c;font-weight:normal;font-family:'Liberation Sans',sans-serif;transform:scaleX(0.870);transform-origin:0 50%;">C:</div>
<div class="box" style="left:611px;top:457px;width:30px;height:16px;background:#fff;border:1px solid #e2e6ea;border-top-color:#c9ccd0"></div>
<div class="t" style="left:616px;top:458px;font-size:11.5px;line-height:14px;color:#1c1c1c;font-weight:normal;font-family:'Liberation Sans',sans-serif;">1</div>
<div class="t" style="left:645.5px;top:458px;font-size:11.5px;line-height:14px;color:#1c1c1c;font-weight:normal;font-family:'Liberation Sans',sans-serif;transform:scaleX(0.928);transform-origin:0 50%;">%</div>
<div class="t" style="left:595.5px;top:478px;font-size:11.5px;line-height:14px;color:#1c1c1c;font-weight:normal;font-family:'Liberation Sans',sans-serif;transform:scaleX(0.939);transform-origin:0 50%;">M:</div>
<div class="box" style="left:611px;top:477px;width:30px;height:16px;background:#fff;border:1px solid #e2e6ea;border-top-color:#c9ccd0"></div>
<div class="t" style="left:616px;top:478px;font-size:11.5px;line-height:14px;color:#1c1c1c;font-weight:normal;font-family:'Liberation Sans',sans-serif;">46</div>
<div class="t" style="left:645.5px;top:478px;font-size:11.5px;line-height:14px;color:#1c1c1c;font-weight:normal;font-family:'Liberation Sans',sans-serif;transform:scaleX(0.928);transform-origin:0 50%;">%</div>
<div class="t" style="left:597.5px;top:498px;font-size:11.5px;line-height:14px;color:#1c1c1c;font-weight:normal;font-family:'Liberation Sans',sans-serif;transform:scaleX(0.977);transform-origin:0 50%;">Y:</div>
<div class="box" style="left:611px;top:497px;width:30px;height:16px;background:#fff;border:1px solid #e2e6ea;border-top-color:#c9ccd0"></div>
<div class="t" style="left:616px;top:498px;font-size:11.5px;line-height:14px;color:#1c1c1c;font-weight:normal;font-family:'Liberation Sans',sans-serif;">100</div>
<div class="t" style="left:645.5px;top:498px;font-size:11.5px;line-height:14px;color:#1c1c1c;font-weight:normal;font-family:'Liberation Sans',sans-serif;transform:scaleX(0.928);transform-origin:0 50%;">%</div>
<div class="t" style="left:597.5px;top:519px;font-size:11.5px;line-height:14px;color:#1c1c1c;font-weight:normal;font-family:'Liberation Sans',sans-serif;transform:scaleX(0.920);transform-origin:0 50%;">K:</div>
<div class="box" style="left:611px;top:518px;width:30px;height:16px;background:#fff;border:1px solid #e2e6ea;border-top-color:#c9ccd0"></div>
<div class="t" style="left:616px;top:519px;font-size:11.5px;line-height:14px;color:#1c1c1c;font-weight:normal;font-family:'Liberation Sans',sans-serif;">0</div>
<div class="t" style="left:645.5px;top:519px;font-size:11.5px;line-height:14px;color:#1c1c1c;font-weight:normal;font-family:'Liberation Sans',sans-serif;transform:scaleX(0.928);transform-origin:0 50%;">%</div>
<div class="t" style="left:485.5px;top:521.5px;font-size:11.5px;line-height:14px;color:#1c1c1c;font-weight:normal;font-family:'Liberation Sans',sans-serif;transform:scaleX(1.093);transform-origin:0 50%;">#</div>
<div class="box" style="left:496px;top:520px;width:68px;height:17px;background:#fff;border:1px solid #8fbbe4;box-shadow:inset 0 0 0 1px #d8e8f6"></div>
<div class="box" style="left:500px;top:523px;width:36px;height:12px;background:#3399ff"></div>
<div class="t" style="left:500.5px;top:522px;font-size:11.5px;line-height:14px;color:#fff;font-weight:normal;font-family:'Liberation Sans',sans-serif;transform:scaleX(0.995);transform-origin:0 50%;">f69907</div>
<div class="box" style="left:225px;top:523px;width:11px;height:11px;background:linear-gradient(135deg,#e6e6e6,#fff);border:1px solid #8e8f8f;box-shadow:inset 0 0 0 1px #f4f4f4"></div>
<div class="t" style="left:239px;top:521.5px;font-size:11.5px;line-height:14px;color:#1c1c1c;font-weight:normal;font-family:'Liberation Sans',sans-serif;transform:scaleX(0.876);transform-origin:0 50%;">Only Web Colors</div>
<div class="box" style="left:560px;top:278px;width:107px;height:24px;border:2px solid #e11b27"></div>
<div class="box" style="left:5px;top:618.5px;width:864px;height:1.5px;background:#2d2d2d"></div>
<div class="box" style="left:868px;top:5px;width:1px;height:615px;background:#333"></div>
</div>
</body>
</html>
